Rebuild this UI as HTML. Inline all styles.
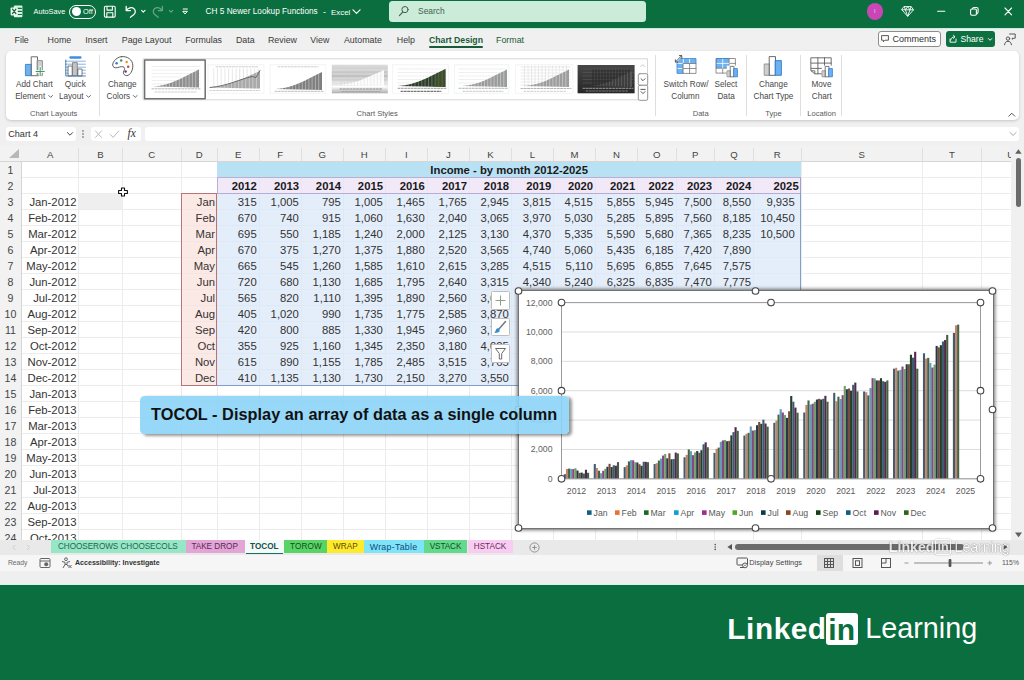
<!DOCTYPE html><html lang="en"><head><meta charset="utf-8"><title>CH 5 Newer Lookup Functions - Excel</title><style>
*{box-sizing:border-box;margin:0;padding:0}
html,body{width:1024px;height:680px;overflow:hidden}
body{position:relative;background:#f0f0f0;font-family:"Liberation Sans",sans-serif;color:#333;font-size:9px}
.abs{position:absolute}
.t{position:absolute;white-space:nowrap;line-height:1}
#title{left:0;top:0;width:1024px;height:28px;background:#0b6e3f}
#title .t{color:#fff}
#titleline{left:0;top:27.6px;width:1024px;height:1.8px;background:#c4efdc}
#tabs{left:0;top:29px;width:1024px;height:22px;background:#f0f0f0}
#tabs .t{font-size:9.3px;color:#3b3b3b;top:6.5px}
#ribbon{left:5.8px;top:50.8px;width:1013px;height:69.2px;background:#fff;border-radius:5px;box-shadow:0 1px 3px rgba(0,0,0,.18)}
#ribbon .t{font-size:8.7px;color:#444}
.sep{position:absolute;width:1px;background:#dcdcdc;top:5px;height:60px}
.glabel{font-size:8.2px !important;color:#555 !important;top:58px}

.wbox{position:absolute;background:#fff;border-radius:3px}
#grid{left:0;top:146px;width:1011px;height:394px;background:#fff;overflow:hidden}
#colhdr{left:0;top:0;width:1011px;height:15.5px;background:#f2f2f2;border-bottom:1px solid #d6d6d6}
#rowhdr{left:0;top:15.5px;width:21.5px;height:380px;background:#f2f2f2;border-right:1px solid #d6d6d6}
.ch{position:absolute;top:4px;font-size:9.6px;color:#444;text-align:center;line-height:1}
.rh{position:absolute;left:0;width:21px;font-size:10.6px;color:#444;text-align:center;line-height:1}

.vl{position:absolute;width:1px;background:#ececec;top:15.5px;height:380px}
.hl{position:absolute;height:1px;background:#ececec;left:21.5px;width:990px}
.c{position:absolute;white-space:nowrap;line-height:1;font-size:11.3px;color:#333;text-align:right}
.b{font-weight:bold;color:#1a1a1a}
#vscroll{left:1011px;top:146px;width:13px;height:394px;background:#f0f0f0}
#sheettabs{left:0;top:540px;width:1024px;height:14.5px;background:#e9e9e9}
.st{position:absolute;top:0;height:13px;font-size:8.6px;line-height:13px;text-align:center;white-space:nowrap;color:#333}
#status{left:0;top:554.5px;width:1024px;height:16px;background:#f6f6f6}
#status .t{font-size:7.4px;color:#555}
#strip{left:0;top:570.5px;width:1024px;height:14px;background:#efefef;border-bottom:1.2px solid #d6f7e6}
#banner{left:0;top:584.6px;width:1024px;height:96px;background:#0a6e3e}
</style></head><body>
<div id="title" class="abs"></div><div id="titleline" class="abs"></div>
<div class="t" style="left:33.60px;top:8.32px;font-size:7.30px;color:#fff;">AutoSave</div>
<div class="abs" style="left:68.8px;top:4.9px;width:27.3px;height:13.7px;border:1.3px solid #fff;border-radius:7px"></div>
<div class="abs" style="left:71.9px;top:7.4px;width:8.7px;height:8.7px;border-radius:5px;background:#fff"></div>
<div class="t" style="left:83.00px;top:8.04px;font-size:7.40px;color:#fff;">Off</div>
<div class="t" style="left:205.60px;top:8.23px;font-size:8.24px;color:#fff;">CH 5 Newer Lookup Functions</div>
<div class="t" style="left:323.00px;top:7.57px;font-size:9.01px;color:#fff;">-</div>
<div class="t" style="left:331.00px;top:8.51px;font-size:7.90px;color:#fff;">Excel</div>
<div class="abs" style="left:389px;top:0.5px;width:257px;height:21.8px;border-radius:3.5px;background:#cbecd9"></div>
<div class="t" style="left:418.00px;top:7.14px;font-size:8.46px;color:#44604f;">Search</div>
<div class="abs" style="left:866.5px;top:3px;width:16.6px;height:16.6px;border-radius:9px;background:#c846b6"></div>
<div class="t" style="left:874.00px;top:8.73px;font-size:5.76px;color:#f6d8f1;">I</div>
<svg class="abs" style="left:0;top:0" width="1024" height="28" viewBox="0 0 1024 28" fill="none" stroke="#fff" stroke-width="1.1" stroke-linecap="round" stroke-linejoin="round">
<rect x="13.8" y="5.6" width="8.6" height="11.6" rx="1" fill="#d9f3e5" stroke="none"/><path d="M17 8.3h4.4M17 11.4h4.4M17 14.5h4.4" stroke="#0b6e3f" stroke-width="1.2"/><rect x="10.6" y="7.4" width="7.2" height="8" rx=".8" fill="#e9f8f0" stroke="none"/><path d="M12.5 9.2l3.4 4.4M15.9 9.2l-3.4 4.4" stroke="#1d5c3b" stroke-width="1.2"/>
<rect x="104.4" y="6.3" width="10.8" height="10.8" rx="1.2"/><path d="M107 6.5v3.6h5.4V6.5M106.8 17v-4.2h6v4.2"/>
<path d="M126.2 6.4v4.2h4.2" stroke-width="1.3"/><path d="M126.4 10.4c1.8-2.6 5.2-3.6 7.4-1.8 2.2 1.8 1.8 4.6-.2 6.2l-3.2 2.4" stroke-width="1.3"/><path d="M141.6 10.4l1.7 1.7 1.7-1.7" stroke-width="1.1"/>
<g opacity=".38"><path d="M162.4 6.4v4.2h-4.2" stroke-width="1.3"/><path d="M162.2 10.4c-1.8-2.6-5.2-3.6-7.4-1.8-2.2 1.8-1.8 4.6.2 6.2l3.2 2.4" stroke-width="1.3"/><path d="M169.4 10.4l1.7 1.7 1.7-1.7" stroke-width="1.1"/></g>
<path d="M183.2 9h4.2" stroke-width="1"/><path d="M183.2 11.3h4.2l-2.1 2.4z" stroke-width="1"/>
<path d="M353 9.8l3.5 3.6 3.5-3.6" stroke-width="1.2"/>
<circle cx="405" cy="9.6" r="3.1" stroke="#44604f" stroke-width="1"/><path d="M402.8 12l-3.4 3.6" stroke="#44604f" stroke-width="1.1"/>
<path d="M904.3 6.6h6.8l2.4 3.2-5.8 6.6-5.8-6.6zM902 9.8h11.4M905.4 9.8l2.3 6.4 2.3-6.4M904.4 6.8l1 3 2.3-3.1 2.3 3.1 1-3" stroke-width=".9"/>
<path d="M937.6 11.3h7.2" stroke-width="1.1"/><rect x="970.6" y="9" width="5.8" height="6.2" rx="1.2" stroke-width="1.1"/><path d="M972.4 8.8c.2-.9.7-1.3 1.5-1.3h2.6c1 0 1.6.6 1.6 1.6v3c0 .8-.4 1.3-1.2 1.5" stroke-width="1.1"/><path d="M1005 8l6.6 6.8M1011.6 8l-6.6 6.8" stroke-width="1.1"/>
</svg>
<div class="t" style="left:14.52px;top:35.91px;font-size:8.85px;color:#3a3a3a;">File</div>
<div class="t" style="left:47.60px;top:35.91px;font-size:8.85px;color:#3a3a3a;">Home</div>
<div class="t" style="left:85.33px;top:35.91px;font-size:8.85px;color:#3a3a3a;">Insert</div>
<div class="t" style="left:121.80px;top:35.91px;font-size:8.85px;color:#3a3a3a;">Page Layout</div>
<div class="t" style="left:185.16px;top:35.91px;font-size:8.85px;color:#3a3a3a;">Formulas</div>
<div class="t" style="left:235.95px;top:35.91px;font-size:8.85px;color:#3a3a3a;">Data</div>
<div class="t" style="left:267.99px;top:35.91px;font-size:8.85px;color:#3a3a3a;">Review</div>
<div class="t" style="left:310.29px;top:35.91px;font-size:8.85px;color:#3a3a3a;">View</div>
<div class="t" style="left:343.96px;top:35.91px;font-size:8.85px;color:#3a3a3a;">Automate</div>
<div class="t" style="left:396.80px;top:35.91px;font-size:8.85px;color:#3a3a3a;">Help</div>
<div class="t" style="left:429.00px;top:36.05px;font-size:8.68px;color:#185c37;font-weight:bold;">Chart Design</div>
<div class="abs" style="left:429px;top:45.8px;width:54px;height:2px;background:#185c37;border-radius:1px"></div>
<div class="t" style="left:496.00px;top:35.91px;font-size:8.85px;color:#185c37;">Format</div>
<div class="abs" style="left:878px;top:31.3px;width:62.5px;height:16.2px;border:1px solid #8d8d8d;border-radius:3px;background:#fff"></div>
<div class="t" style="left:892.50px;top:34.98px;font-size:9.00px;color:#2f2f2f;">Comments</div>
<div class="abs" style="left:946.3px;top:31.3px;width:48.7px;height:16.2px;border-radius:3px;background:#0d7040"></div>
<div class="t" style="left:960.50px;top:35.30px;font-size:8.62px;color:#fff;">Share</div>
<svg class="abs" style="left:870px;top:29px" width="154" height="22" viewBox="870 29 154 22" fill="none" stroke-linecap="round" stroke-linejoin="round">
<path d="M882 35.6h6.4v4.6h-3.4l-1.6 1.6v-1.6H882z" stroke="#444" stroke-width=".9"/>
<path d="M950 39v3.2h6V39" stroke="#fff" stroke-width=".9"/><path d="M950.6 40.2c.4-2.2 1.8-3.4 3.8-3.4M953.4 35.2l1.6 1.6-1.6 1.6" stroke="#fff" stroke-width=".9"/>
<path d="M988.4 38.6l1.7 1.7 1.7-1.7" stroke="#fff" stroke-width="1"/>
<circle cx="1008" cy="38.6" r="1.7" stroke="#444" stroke-width=".9"/><path d="M1004.6 44.8c.2-2.4 1.4-3.4 3.4-3.4s3.2 1 3.4 3.4" stroke="#444" stroke-width=".9"/><path d="M1009.6 34h5.6v4.2h-1.6l-1.2 1.2v-1.2" stroke="#444" stroke-width=".9"/>
</svg>
<div id="ribbon" class="abs"></div>
<div class="t" style="left:16.04px;top:81.36px;font-size:8.20px;color:#484848;">Add Chart</div>
<div class="t" style="left:15.16px;top:92.76px;font-size:8.20px;color:#484848;">Element</div>
<div class="t" style="left:64.82px;top:81.36px;font-size:8.20px;color:#484848;">Quick</div>
<div class="t" style="left:58.89px;top:92.76px;font-size:8.20px;color:#484848;">Layout</div>
<div class="t" style="left:107.94px;top:81.36px;font-size:8.20px;color:#484848;">Change</div>
<div class="t" style="left:106.55px;top:92.76px;font-size:8.20px;color:#484848;">Colors</div>
<div class="t" style="left:663.44px;top:81.36px;font-size:8.20px;color:#484848;">Switch Row/</div>
<div class="t" style="left:671.27px;top:92.76px;font-size:8.20px;color:#484848;">Column</div>
<div class="t" style="left:714.60px;top:81.36px;font-size:8.20px;color:#484848;">Select</div>
<div class="t" style="left:717.44px;top:92.76px;font-size:8.20px;color:#484848;">Data</div>
<div class="t" style="left:759.04px;top:81.36px;font-size:8.20px;color:#484848;">Change</div>
<div class="t" style="left:753.52px;top:92.76px;font-size:8.20px;color:#484848;">Chart Type</div>
<div class="t" style="left:811.47px;top:81.36px;font-size:8.20px;color:#484848;">Move</div>
<div class="t" style="left:811.77px;top:92.76px;font-size:8.20px;color:#484848;">Chart</div>
<div class="t" style="left:30.04px;top:109.77px;font-size:7.60px;color:#5a5a5a;">Chart Layouts</div>
<div class="t" style="left:356.50px;top:109.77px;font-size:7.60px;color:#5a5a5a;">Chart Styles</div>
<div class="t" style="left:692.67px;top:109.77px;font-size:7.60px;color:#5a5a5a;">Data</div>
<div class="t" style="left:765.26px;top:109.77px;font-size:7.60px;color:#5a5a5a;">Type</div>
<div class="t" style="left:807.23px;top:109.77px;font-size:7.60px;color:#5a5a5a;">Location</div>
<div class="abs" style="left:99px;top:55px;width:1px;height:61px;background:#dedede"></div>
<div class="abs" style="left:654.9px;top:55px;width:1px;height:61px;background:#dedede"></div>
<div class="abs" style="left:745.7px;top:55px;width:1px;height:61px;background:#dedede"></div>
<div class="abs" style="left:800.4px;top:55px;width:1px;height:61px;background:#dedede"></div>
<div class="abs" style="left:841.4px;top:55px;width:1px;height:61px;background:#dedede"></div>
<svg class="abs" style="left:0;top:50px" width="1024" height="72" viewBox="0 50 1024 72" fill="none" stroke-linecap="round" stroke-linejoin="round">
<defs>
<linearGradient id="g4" x1="0" y1="0" x2="0" y2="1"><stop offset="0" stop-color="#dcdcdc"/><stop offset=".4" stop-color="#bebebe"/><stop offset=".68" stop-color="#e6e6e6"/><stop offset=".8" stop-color="#efefef"/><stop offset="1" stop-color="#adadad"/></linearGradient>
<linearGradient id="g8" x1="0" y1="0" x2="0" y2="1"><stop offset="0" stop-color="#474747"/><stop offset="1" stop-color="#262626"/></linearGradient>
</defs>
<path d="M48.8 95.5l1.9 1.9 1.9-1.9" stroke="#555" stroke-width=".9"/>
<path d="M86.7 95.5l1.9 1.9 1.9-1.9" stroke="#555" stroke-width=".9"/>
<path d="M133.3 95.5l1.9 1.9 1.9-1.9" stroke="#555" stroke-width=".9"/>
<rect x="25.8" y="64.4" width="5.8" height="11.3" fill="#6db1ef" stroke="#2f7dd0" stroke-width=".9"/>
<rect x="31.6" y="56.8" width="5.9" height="18.9" fill="#fff" stroke="#5a5a5a" stroke-width=".9"/>
<rect x="37.5" y="60.6" width="4.9" height="15.1" fill="#cfcfcf" stroke="#8a8a8a" stroke-width=".9"/>
<path d="M40.2 67.2v8.6M35.9 71.5h8.6" stroke="#fff" stroke-width="2.4"/><path d="M40.2 67.4v8.2M36.1 71.5h8.2" stroke="#3a9a64" stroke-width="1"/>
<rect x="69.3" y="56.2" width="12.3" height="2.5" rx="1.1" fill="#3f8fdf"/>
<path d="M65.8 61.2h19.6" stroke="#6d9fd3" stroke-width=".8"/>
<path d="M65.8 64.2h19.6" stroke="#6d9fd3" stroke-width=".8"/>
<path d="M65.8 67.2h19.6" stroke="#6d9fd3" stroke-width=".8"/>
<path d="M65.8 70.2h19.6" stroke="#6d9fd3" stroke-width=".8"/>
<path d="M65.8 73.2h19.6" stroke="#6d9fd3" stroke-width=".8"/>
<rect x="68.4" y="66" width="3.8" height="10" fill="#fff" stroke="#5a5a5a" stroke-width=".8"/>
<rect x="72.9" y="62.6" width="4.4" height="13.4" fill="#c4c4c4" stroke="#777" stroke-width=".8"/>
<rect x="78.2" y="69" width="3.8" height="7" fill="#fff" stroke="#5a5a5a" stroke-width=".8"/>
<path d="M65.8 60v16h19.6" stroke="#2f6fb5" stroke-width=".9"/>
<path d="M121.6 56.6c6.2-.6 11 3.4 11.2 8.6.2 5.4-2.6 10.2-6 10.4-2.2.1-3.6-1.6-3.4-3.4.2-1.6 1.4-2.4 1.2-3.8-.3-1.8-2.6-2.2-5-1.4-2.6.9-5.4 1.4-6.6-.6-1.6-2.8 2.4-9.200 8.600-9.800z" fill="#fff" stroke="#5a5a5a" stroke-width="1"/>
<circle cx="116.6" cy="63.2" r="1.25" fill="#2f7dd0"/>
<circle cx="121.2" cy="60.6" r="1.25" fill="#3a9a4a"/>
<circle cx="126.6" cy="62" r="1.25" fill="#e8912a"/>
<circle cx="128.2" cy="66.8" r="1.25" fill="#d2413a"/>
<circle cx="125.6" cy="71.4" r="1.25" fill="#6a3a8a"/>
<rect x="677" y="58.5" width="19" height="14.9" fill="#fff"/>
<rect x="677" y="58.5" width="19" height="5" fill="#6db1ef"/><rect x="677" y="58.5" width="6.3" height="14.9" fill="#6db1ef"/>
<path d="M683.3 58.5v5M689.6 58.5v5M677 63.5h6.300M677 68.5h6.300" stroke="#fff" stroke-width=".8"/>
<path d="M683.3 63.5h12.700v9.900h-12.700z M689.6 63.5v9.9M683.3 68.5h12.7" stroke="#777" stroke-width=".8"/>
<path d="M677 58.500h19v5M677 58.500v14.900h6.300" stroke="#3f86d4" stroke-width=".8"/>
<path d="M674 62.600l7.600-7.600" stroke="#fff" stroke-width="3"/><path d="M675.4 59.800v2.200h2.200M675.600 61.800l6-6M679.400 55.600h2.400v2.400" stroke="#444" stroke-width=".9"/>
<rect x="716.4" y="58.5" width="19" height="14.6" fill="#fff"/><rect x="716.4" y="58.5" width="12.7" height="9.7" fill="#6db1ef"/>
<path d="M716.4 58.5h19v14.600h-19zM729.100 58.500v14.600M716.400 68.200h19M729.100 63.400h6.300M722.700 68.200v4.900" stroke="#777" stroke-width=".8"/>
<path d="M722.700 58.500v9.700M716.400 63.400h12.700" stroke="#fff" stroke-width=".8"/><path d="M716.400 68.200v-9.700h12.700" stroke="#3f86d4" stroke-width=".8"/>
<rect x="726.8" y="65.6" width="11.6" height="11.8" fill="#fff" stroke="none"/>
<rect x="727.4" y="70.8" width="3.2" height="6" fill="#cfcfcf" stroke="#8a8a8a" stroke-width=".8"/>
<rect x="730.6" y="66.4" width="3.4" height="10.4" fill="#fff" stroke="#5a5a5a" stroke-width=".8"/>
<rect x="734" y="68.6" width="3.4" height="8.200" fill="#6db1ef" stroke="#2f7dd0" stroke-width=".8"/>
<rect x="764.6" y="64" width="5" height="11.300" fill="#cfcfcf" stroke="#8a8a8a" stroke-width=".9"/>
<rect x="769.6" y="56.6" width="5.9" height="18.700" fill="#fff" stroke="#5a5a5a" stroke-width=".9"/>
<rect x="775.5" y="60.6" width="5.9" height="14.700" fill="#6db1ef" stroke="#2f7dd0" stroke-width=".9"/>
<path d="M811.2 57.800h20v16h-16.400l-3.600-3zM811.200 63.100h20M811.200 68.400h20M817.900 57.800v16M824.500 57.800v16" stroke="#5f5f5f" stroke-width=".9" fill="#fff"/>
<path d="M811.2 70.800h3.600v3" stroke="#5f5f5f" stroke-width=".9"/>
<rect x="821.8" y="65.6" width="11.6" height="11.8" fill="#fff" stroke="none"/>
<rect x="822.4" y="70.8" width="3.2" height="6" fill="#cfcfcf" stroke="#8a8a8a" stroke-width=".8"/>
<rect x="825.6" y="66.4" width="3.4" height="10.4" fill="#fff" stroke="#5a5a5a" stroke-width=".8"/>
<rect x="829" y="68.6" width="3.4" height="8.200" fill="#6db1ef" stroke="#2f7dd0" stroke-width=".8"/>
<rect x="143.5" y="58.800" width="504" height="41" fill="#fff" stroke="#d6d6d6" stroke-width="1"/>
<path d="M640.800 66.600l2-2 2 2" stroke="#c2c2c2" stroke-width=".9"/>
<rect x="638.300" y="73.700" width="9.400" height="11.600" rx="1.5" fill="#fff" stroke="#8a8a8a" stroke-width=".9"/><path d="M641 78.700l2 2 2-2" stroke="#444" stroke-width=".9"/>
<rect x="638.300" y="85.300" width="9.400" height="15" rx="1.500" fill="#fff" stroke="#8a8a8a" stroke-width=".9"/><path d="M640.800 89.400h4.400M641 91.600l2 2 2-2" stroke="#444" stroke-width=".9"/>
<rect x="144.600" y="59.900" width="60.600" height="38.800" fill="#fff" stroke="#6f6f6f" stroke-width="1.500"/>
<path d="M152.0 66.5H200.0" stroke="#e2e2e2" stroke-width=".6"/>
<path d="M152.0 70.0H200.0" stroke="#e2e2e2" stroke-width=".6"/>
<path d="M152.0 73.5H200.0" stroke="#e2e2e2" stroke-width=".6"/>
<path d="M152.0 77.0H200.0" stroke="#e2e2e2" stroke-width=".6"/>
<path d="M152.0 80.5H200.0" stroke="#e2e2e2" stroke-width=".6"/>
<path d="M152.0 84.0H200.0" stroke="#e2e2e2" stroke-width=".6"/>
<path d="M153.0 86.5C172.0 85.0 180.0 78.5 199.0 69.5V87.5z" fill="#8f8f8f" opacity="1"/>
<path d="M156.3 69.0V87.5" stroke="#fff" stroke-width="0.7" opacity="0.55"/>
<path d="M159.6 69.0V87.5" stroke="#fff" stroke-width="0.7" opacity="0.55"/>
<path d="M162.9 69.0V87.5" stroke="#fff" stroke-width="0.7" opacity="0.55"/>
<path d="M166.1 69.0V87.5" stroke="#fff" stroke-width="0.7" opacity="0.55"/>
<path d="M169.4 69.0V87.5" stroke="#fff" stroke-width="0.7" opacity="0.55"/>
<path d="M172.7 69.0V87.5" stroke="#fff" stroke-width="0.7" opacity="0.55"/>
<path d="M176.0 69.0V87.5" stroke="#fff" stroke-width="0.7" opacity="0.55"/>
<path d="M179.3 69.0V87.5" stroke="#fff" stroke-width="0.7" opacity="0.55"/>
<path d="M182.6 69.0V87.5" stroke="#fff" stroke-width="0.7" opacity="0.55"/>
<path d="M185.9 69.0V87.5" stroke="#fff" stroke-width="0.7" opacity="0.55"/>
<path d="M189.1 69.0V87.5" stroke="#fff" stroke-width="0.7" opacity="0.55"/>
<path d="M192.4 69.0V87.5" stroke="#fff" stroke-width="0.7" opacity="0.55"/>
<path d="M195.7 69.0V87.5" stroke="#fff" stroke-width="0.7" opacity="0.55"/>
<path d="M152.0 88.8H200.0" stroke="#b9b9b9" stroke-width="1" stroke-dasharray="2 1.300"/>
<path d="M155.0 92.0H196.0" stroke="#cfcfcf" stroke-width="1" stroke-dasharray="2 1.300"/>
<rect x="208.400" y="64.700" width="55.600" height="28.600" fill="#fff" stroke="#ececec" stroke-width=".6"/>
<path d="M216.0 66.8H258.0" stroke="#cfcfcf" stroke-width="1" stroke-dasharray="2 1.300"/>
<path d="M213.7 69.0V88.0" stroke="#d0d0d0" stroke-width="0.6" opacity="1"/>
<path d="M217.4 69.0V88.0" stroke="#d0d0d0" stroke-width="0.6" opacity="1"/>
<path d="M221.1 69.0V88.0" stroke="#d0d0d0" stroke-width="0.6" opacity="1"/>
<path d="M224.9 69.0V88.0" stroke="#d0d0d0" stroke-width="0.6" opacity="1"/>
<path d="M228.6 69.0V88.0" stroke="#d0d0d0" stroke-width="0.6" opacity="1"/>
<path d="M232.3 69.0V88.0" stroke="#d0d0d0" stroke-width="0.6" opacity="1"/>
<path d="M236.0 69.0V88.0" stroke="#d0d0d0" stroke-width="0.6" opacity="1"/>
<path d="M239.7 69.0V88.0" stroke="#d0d0d0" stroke-width="0.6" opacity="1"/>
<path d="M243.4 69.0V88.0" stroke="#d0d0d0" stroke-width="0.6" opacity="1"/>
<path d="M247.1 69.0V88.0" stroke="#d0d0d0" stroke-width="0.6" opacity="1"/>
<path d="M250.9 69.0V88.0" stroke="#d0d0d0" stroke-width="0.6" opacity="1"/>
<path d="M254.6 69.0V88.0" stroke="#d0d0d0" stroke-width="0.6" opacity="1"/>
<path d="M258.3 69.0V88.0" stroke="#d0d0d0" stroke-width="0.6" opacity="1"/>
<path d="M210.0 87.5C231.0 86.0 239.0 79.8 260.0 71.0V88.5z" fill="#a9a9a9" opacity="1"/>
<path d="M213.6 70.0V88.5" stroke="#fff" stroke-width="0.7" opacity="0.55"/>
<path d="M217.1 70.0V88.5" stroke="#fff" stroke-width="0.7" opacity="0.55"/>
<path d="M220.7 70.0V88.5" stroke="#fff" stroke-width="0.7" opacity="0.55"/>
<path d="M224.3 70.0V88.5" stroke="#fff" stroke-width="0.7" opacity="0.55"/>
<path d="M227.9 70.0V88.5" stroke="#fff" stroke-width="0.7" opacity="0.55"/>
<path d="M231.4 70.0V88.5" stroke="#fff" stroke-width="0.7" opacity="0.55"/>
<path d="M235.0 70.0V88.5" stroke="#fff" stroke-width="0.7" opacity="0.55"/>
<path d="M238.6 70.0V88.5" stroke="#fff" stroke-width="0.7" opacity="0.55"/>
<path d="M242.1 70.0V88.5" stroke="#fff" stroke-width="0.7" opacity="0.55"/>
<path d="M245.7 70.0V88.5" stroke="#fff" stroke-width="0.7" opacity="0.55"/>
<path d="M249.3 70.0V88.5" stroke="#fff" stroke-width="0.7" opacity="0.55"/>
<path d="M252.9 70.0V88.5" stroke="#fff" stroke-width="0.7" opacity="0.55"/>
<path d="M256.4 70.0V88.5" stroke="#fff" stroke-width="0.7" opacity="0.55"/>
<path d="M210 87.500C228 86 240 79 252 76.500l4 1 4-7" stroke="#6a6a6a" stroke-width="1"/>
<path d="M210.0 90.5H260.0" stroke="#d2d2d2" stroke-width="1" stroke-dasharray="2 1.300"/>
<rect x="270.400" y="64.700" width="55.400" height="28.600" fill="#fff" stroke="#ececec" stroke-width=".6"/>
<path d="M278.0 66.8H318.0" stroke="#cfcfcf" stroke-width="1" stroke-dasharray="2 1.300"/>
<path d="M276.0 89.0C295.0 87.5 303.0 81.0 322.0 72.0V90.0z" fill="#7f7f7f" opacity="1"/>
<path d="M279.3 71.0V90.0" stroke="#fff" stroke-width="0.7" opacity="0.55"/>
<path d="M282.6 71.0V90.0" stroke="#fff" stroke-width="0.7" opacity="0.55"/>
<path d="M285.9 71.0V90.0" stroke="#fff" stroke-width="0.7" opacity="0.55"/>
<path d="M289.1 71.0V90.0" stroke="#fff" stroke-width="0.7" opacity="0.55"/>
<path d="M292.4 71.0V90.0" stroke="#fff" stroke-width="0.7" opacity="0.55"/>
<path d="M295.7 71.0V90.0" stroke="#fff" stroke-width="0.7" opacity="0.55"/>
<path d="M299.0 71.0V90.0" stroke="#fff" stroke-width="0.7" opacity="0.55"/>
<path d="M302.3 71.0V90.0" stroke="#fff" stroke-width="0.7" opacity="0.55"/>
<path d="M305.6 71.0V90.0" stroke="#fff" stroke-width="0.7" opacity="0.55"/>
<path d="M308.9 71.0V90.0" stroke="#fff" stroke-width="0.7" opacity="0.55"/>
<path d="M312.1 71.0V90.0" stroke="#fff" stroke-width="0.7" opacity="0.55"/>
<path d="M315.4 71.0V90.0" stroke="#fff" stroke-width="0.7" opacity="0.55"/>
<path d="M318.7 71.0V90.0" stroke="#fff" stroke-width="0.7" opacity="0.55"/>
<path d="M275.0 91.3H324.0" stroke="#bdbdbd" stroke-width="1" stroke-dasharray="2 1.300"/>
<rect x="331.800" y="64.700" width="56" height="28.600" fill="url(#g4)"/>
<path d="M333.0 70.0H387.0" stroke="#f4f4f4" stroke-width=".6"/>
<path d="M333.0 74.0H387.0" stroke="#f4f4f4" stroke-width=".6"/>
<path d="M333.0 78.0H387.0" stroke="#f4f4f4" stroke-width=".6"/>
<path d="M333.0 82.0H387.0" stroke="#f4f4f4" stroke-width=".6"/>
<path d="M338.0 85.0C357.0 83.5 365.0 78.0 384.0 70.0V86.0z" fill="#ffffff" opacity="0.92"/>
<path d="M341.3 70.0V86.0" stroke="#cfcfcf" stroke-width="0.7" opacity="0.5"/>
<path d="M344.6 70.0V86.0" stroke="#cfcfcf" stroke-width="0.7" opacity="0.5"/>
<path d="M347.9 70.0V86.0" stroke="#cfcfcf" stroke-width="0.7" opacity="0.5"/>
<path d="M351.1 70.0V86.0" stroke="#cfcfcf" stroke-width="0.7" opacity="0.5"/>
<path d="M354.4 70.0V86.0" stroke="#cfcfcf" stroke-width="0.7" opacity="0.5"/>
<path d="M357.7 70.0V86.0" stroke="#cfcfcf" stroke-width="0.7" opacity="0.5"/>
<path d="M361.0 70.0V86.0" stroke="#cfcfcf" stroke-width="0.7" opacity="0.5"/>
<path d="M364.3 70.0V86.0" stroke="#cfcfcf" stroke-width="0.7" opacity="0.5"/>
<path d="M367.6 70.0V86.0" stroke="#cfcfcf" stroke-width="0.7" opacity="0.5"/>
<path d="M370.9 70.0V86.0" stroke="#cfcfcf" stroke-width="0.7" opacity="0.5"/>
<path d="M374.1 70.0V86.0" stroke="#cfcfcf" stroke-width="0.7" opacity="0.5"/>
<path d="M377.4 70.0V86.0" stroke="#cfcfcf" stroke-width="0.7" opacity="0.5"/>
<path d="M380.7 70.0V86.0" stroke="#cfcfcf" stroke-width="0.7" opacity="0.5"/>
<path d="M333 86.500h53" stroke="#fff" stroke-width="1.600"/>
<path d="M340.0 89.0H382.0" stroke="#8d8d8d" stroke-width="1" stroke-dasharray="2 1.300"/>
<path d="M342.0 91.5H380.0" stroke="#a5a5a5" stroke-width="1" stroke-dasharray="2 1.300"/>
<rect x="393" y="64.700" width="55.600" height="28.600" fill="#fff" stroke="#ececec" stroke-width=".6"/>
<path d="M398.0 69.0H446.0" stroke="#e2e2e2" stroke-width=".6"/>
<path d="M398.0 72.5H446.0" stroke="#e2e2e2" stroke-width=".6"/>
<path d="M398.0 76.0H446.0" stroke="#e2e2e2" stroke-width=".6"/>
<path d="M398.0 79.5H446.0" stroke="#e2e2e2" stroke-width=".6"/>
<path d="M398.0 83.0H446.0" stroke="#e2e2e2" stroke-width=".6"/>
<path d="M398.0 86.0C417.8 84.5 425.8 78.0 445.5 69.0V87.0z" fill="#2c3d2a" opacity="1"/>
<path d="M401.4 69.0V87.0" stroke="#fff" stroke-width="0.7" opacity="0.4"/>
<path d="M404.8 69.0V87.0" stroke="#fff" stroke-width="0.7" opacity="0.4"/>
<path d="M408.2 69.0V87.0" stroke="#fff" stroke-width="0.7" opacity="0.4"/>
<path d="M411.6 69.0V87.0" stroke="#fff" stroke-width="0.7" opacity="0.4"/>
<path d="M415.0 69.0V87.0" stroke="#fff" stroke-width="0.7" opacity="0.4"/>
<path d="M418.4 69.0V87.0" stroke="#fff" stroke-width="0.7" opacity="0.4"/>
<path d="M421.8 69.0V87.0" stroke="#fff" stroke-width="0.7" opacity="0.4"/>
<path d="M425.1 69.0V87.0" stroke="#fff" stroke-width="0.7" opacity="0.4"/>
<path d="M428.5 69.0V87.0" stroke="#fff" stroke-width="0.7" opacity="0.4"/>
<path d="M431.9 69.0V87.0" stroke="#fff" stroke-width="0.7" opacity="0.4"/>
<path d="M435.3 69.0V87.0" stroke="#fff" stroke-width="0.7" opacity="0.4"/>
<path d="M438.7 69.0V87.0" stroke="#fff" stroke-width="0.7" opacity="0.4"/>
<path d="M442.1 69.0V87.0" stroke="#fff" stroke-width="0.7" opacity="0.4"/>
<path d="M434 76l11.500-7v18h-11.500z" fill="#4a5a2e" opacity=".6"/>
<path d="M398.0 88.3H446.0" stroke="#9a9a9a" stroke-width="1" stroke-dasharray="2 1.300"/>
<path d="M401.0 91.3H441.0" stroke="#555" stroke-width="1" stroke-dasharray="2 1.300"/>
<rect x="454.800" y="64.700" width="54" height="28.600" fill="#fff" stroke="#e6ecf2" stroke-width=".6"/>
<path d="M459.0 69.0H507.0" stroke="#e2e2e2" stroke-width=".6"/>
<path d="M459.0 72.5H507.0" stroke="#e2e2e2" stroke-width=".6"/>
<path d="M459.0 76.0H507.0" stroke="#e2e2e2" stroke-width=".6"/>
<path d="M459.0 79.5H507.0" stroke="#e2e2e2" stroke-width=".6"/>
<path d="M459.0 83.0H507.0" stroke="#e2e2e2" stroke-width=".6"/>
<path d="M462.0 86.0C480.5 84.5 488.5 78.2 507.0 69.5V87.0z" fill="#9b9b9b" opacity="1"/>
<path d="M465.2 69.0V87.0" stroke="#fff" stroke-width="0.7" opacity="0.55"/>
<path d="M468.4 69.0V87.0" stroke="#fff" stroke-width="0.7" opacity="0.55"/>
<path d="M471.6 69.0V87.0" stroke="#fff" stroke-width="0.7" opacity="0.55"/>
<path d="M474.9 69.0V87.0" stroke="#fff" stroke-width="0.7" opacity="0.55"/>
<path d="M478.1 69.0V87.0" stroke="#fff" stroke-width="0.7" opacity="0.55"/>
<path d="M481.3 69.0V87.0" stroke="#fff" stroke-width="0.7" opacity="0.55"/>
<path d="M484.5 69.0V87.0" stroke="#fff" stroke-width="0.7" opacity="0.55"/>
<path d="M487.7 69.0V87.0" stroke="#fff" stroke-width="0.7" opacity="0.55"/>
<path d="M490.9 69.0V87.0" stroke="#fff" stroke-width="0.7" opacity="0.55"/>
<path d="M494.1 69.0V87.0" stroke="#fff" stroke-width="0.7" opacity="0.55"/>
<path d="M497.4 69.0V87.0" stroke="#fff" stroke-width="0.7" opacity="0.55"/>
<path d="M500.6 69.0V87.0" stroke="#fff" stroke-width="0.7" opacity="0.55"/>
<path d="M503.8 69.0V87.0" stroke="#fff" stroke-width="0.7" opacity="0.55"/>
<path d="M459.0 88.3H508.0" stroke="#b5b5b5" stroke-width="1" stroke-dasharray="2 1.300"/>
<path d="M463.0 91.3H503.0" stroke="#c9c9c9" stroke-width="1" stroke-dasharray="2 1.300"/>
<rect x="515.800" y="64.700" width="57" height="28.600" fill="#fff" stroke="#ececec" stroke-width=".6"/>
<path d="M521.0 67.0H570.0" stroke="#dcdcdc" stroke-width=".6"/>
<path d="M521.0 70.0H570.0" stroke="#dcdcdc" stroke-width=".6"/>
<path d="M521.0 73.0H570.0" stroke="#dcdcdc" stroke-width=".6"/>
<path d="M521.0 76.0H570.0" stroke="#dcdcdc" stroke-width=".6"/>
<path d="M521.0 79.0H570.0" stroke="#dcdcdc" stroke-width=".6"/>
<path d="M521.0 82.0H570.0" stroke="#dcdcdc" stroke-width=".6"/>
<path d="M521.0 85.0H570.0" stroke="#dcdcdc" stroke-width=".6"/>
<path d="M524.5 66.0V87.0" stroke="#dcdcdc" stroke-width="0.6" opacity="1"/>
<path d="M528.0 66.0V87.0" stroke="#dcdcdc" stroke-width="0.6" opacity="1"/>
<path d="M531.5 66.0V87.0" stroke="#dcdcdc" stroke-width="0.6" opacity="1"/>
<path d="M535.0 66.0V87.0" stroke="#dcdcdc" stroke-width="0.6" opacity="1"/>
<path d="M538.5 66.0V87.0" stroke="#dcdcdc" stroke-width="0.6" opacity="1"/>
<path d="M542.0 66.0V87.0" stroke="#dcdcdc" stroke-width="0.6" opacity="1"/>
<path d="M545.5 66.0V87.0" stroke="#dcdcdc" stroke-width="0.6" opacity="1"/>
<path d="M549.0 66.0V87.0" stroke="#dcdcdc" stroke-width="0.6" opacity="1"/>
<path d="M552.5 66.0V87.0" stroke="#dcdcdc" stroke-width="0.6" opacity="1"/>
<path d="M556.0 66.0V87.0" stroke="#dcdcdc" stroke-width="0.6" opacity="1"/>
<path d="M559.5 66.0V87.0" stroke="#dcdcdc" stroke-width="0.6" opacity="1"/>
<path d="M563.0 66.0V87.0" stroke="#dcdcdc" stroke-width="0.6" opacity="1"/>
<path d="M566.5 66.0V87.0" stroke="#dcdcdc" stroke-width="0.6" opacity="1"/>
<path d="M524.0 86.0C542.5 84.5 550.5 78.2 569.0 69.5V87.0z" fill="#9d9d9d" opacity="1"/>
<path d="M527.2 69.0V87.0" stroke="#fff" stroke-width="0.7" opacity="0.55"/>
<path d="M530.4 69.0V87.0" stroke="#fff" stroke-width="0.7" opacity="0.55"/>
<path d="M533.6 69.0V87.0" stroke="#fff" stroke-width="0.7" opacity="0.55"/>
<path d="M536.9 69.0V87.0" stroke="#fff" stroke-width="0.7" opacity="0.55"/>
<path d="M540.1 69.0V87.0" stroke="#fff" stroke-width="0.7" opacity="0.55"/>
<path d="M543.3 69.0V87.0" stroke="#fff" stroke-width="0.7" opacity="0.55"/>
<path d="M546.5 69.0V87.0" stroke="#fff" stroke-width="0.7" opacity="0.55"/>
<path d="M549.7 69.0V87.0" stroke="#fff" stroke-width="0.7" opacity="0.55"/>
<path d="M552.9 69.0V87.0" stroke="#fff" stroke-width="0.7" opacity="0.55"/>
<path d="M556.1 69.0V87.0" stroke="#fff" stroke-width="0.7" opacity="0.55"/>
<path d="M559.4 69.0V87.0" stroke="#fff" stroke-width="0.7" opacity="0.55"/>
<path d="M562.6 69.0V87.0" stroke="#fff" stroke-width="0.7" opacity="0.55"/>
<path d="M565.8 69.0V87.0" stroke="#fff" stroke-width="0.7" opacity="0.55"/>
<path d="M521.0 88.5H571.0" stroke="#b5b5b5" stroke-width="1" stroke-dasharray="2 1.300"/>
<path d="M524.0 91.3H566.0" stroke="#d0d0d0" stroke-width="1" stroke-dasharray="2 1.300"/>
<rect x="577.600" y="65" width="57" height="28.300" fill="url(#g8)"/>
<path d="M583.0 69.0H633.0" stroke="#5a5a5a" stroke-width=".6"/>
<path d="M583.0 72.5H633.0" stroke="#5a5a5a" stroke-width=".6"/>
<path d="M583.0 76.0H633.0" stroke="#5a5a5a" stroke-width=".6"/>
<path d="M583.0 79.5H633.0" stroke="#5a5a5a" stroke-width=".6"/>
<path d="M583.0 83.0H633.0" stroke="#5a5a5a" stroke-width=".6"/>
<path d="M590.0 86.0C607.0 84.5 615.0 79.0 632.0 71.0V87.0z" fill="#5b5b5b" opacity="0.9"/>
<path d="M593.0 70.0V87.0" stroke="#2e2e2e" stroke-width="1.3" opacity="0.9"/>
<path d="M596.0 70.0V87.0" stroke="#2e2e2e" stroke-width="1.3" opacity="0.9"/>
<path d="M599.0 70.0V87.0" stroke="#2e2e2e" stroke-width="1.3" opacity="0.9"/>
<path d="M602.0 70.0V87.0" stroke="#2e2e2e" stroke-width="1.3" opacity="0.9"/>
<path d="M605.0 70.0V87.0" stroke="#2e2e2e" stroke-width="1.3" opacity="0.9"/>
<path d="M608.0 70.0V87.0" stroke="#2e2e2e" stroke-width="1.3" opacity="0.9"/>
<path d="M611.0 70.0V87.0" stroke="#2e2e2e" stroke-width="1.3" opacity="0.9"/>
<path d="M614.0 70.0V87.0" stroke="#2e2e2e" stroke-width="1.3" opacity="0.9"/>
<path d="M617.0 70.0V87.0" stroke="#2e2e2e" stroke-width="1.3" opacity="0.9"/>
<path d="M620.0 70.0V87.0" stroke="#2e2e2e" stroke-width="1.3" opacity="0.9"/>
<path d="M623.0 70.0V87.0" stroke="#2e2e2e" stroke-width="1.3" opacity="0.9"/>
<path d="M626.0 70.0V87.0" stroke="#2e2e2e" stroke-width="1.3" opacity="0.9"/>
<path d="M629.0 70.0V87.0" stroke="#2e2e2e" stroke-width="1.3" opacity="0.9"/>
<path d="M583.0 88.3H633.0" stroke="#9a9a9a" stroke-width="1" stroke-dasharray="2 1.300"/>
<path d="M586.0 91.0H628.0" stroke="#777" stroke-width="1" stroke-dasharray="2 1.300"/>
</svg>
<svg class="abs" style="left:1004px;top:108px" width="16" height="12" viewBox="0 0 16 12" fill="none"><path d="M4.800 8.200l3-3 3 3" stroke="#555" stroke-width="1" stroke-linecap="round" stroke-linejoin="round"/></svg>
<div class="wbox" style="left:6px;top:127.2px;width:70px;height:13.8px"></div>
<div class="t" style="left:8.20px;top:129.56px;font-size:9.15px;color:#333;">Chart 4</div>
<div class="wbox" style="left:90.8px;top:127.2px;width:50px;height:13.8px"></div>
<div class="t" style="left:127.5px;top:127.6px;font-size:11.5px;font-style:italic;font-family:'Liberation Serif',serif;color:#333">fx</div>
<div class="wbox" style="left:145px;top:127.2px;width:874px;height:13.8px"></div>
<svg class="abs" style="left:0;top:122px" width="1024" height="24" viewBox="0 122 1024 24" fill="none" stroke-linecap="round" stroke-linejoin="round">
<path d="M67.4 132.6l2.6 2.6 2.6-2.6" stroke="#444" stroke-width="1"/>
<circle cx="83" cy="131" r=".8" fill="#555"/><circle cx="83" cy="134" r=".8" fill="#555"/><circle cx="83" cy="137" r=".8" fill="#555"/>
<path d="M95.5 131l6 6.4M101.5 131l-6 6.4" stroke="#b8b8b8" stroke-width="1"/><path d="M110.5 134.6l2.6 2.8 5.6-6.4" stroke="#b8b8b8" stroke-width="1"/>
<path d="M1010 132.400l3.100 3 3.100-3" stroke="#aaa" stroke-width="1"/>
</svg>
<div id="grid" class="abs">
<div class="abs" style="left:217.3px;top:15.5px;width:583.7px;height:16px;background:#b9e1f4"></div>
<div class="abs" style="left:78.7px;top:47.5px;width:43.6px;height:16px;background:#efefef"></div>
<div class="vl" style="left:78.2px"></div>
<div class="vl" style="left:121.8px"></div>
<div class="vl" style="left:180.8px"></div>
<div class="vl" style="left:216.8px"></div>
<div class="vl" style="left:258.7px"></div>
<div class="vl" style="left:300.9px"></div>
<div class="vl" style="left:342.8px"></div>
<div class="vl" style="left:384.8px"></div>
<div class="vl" style="left:426.7px"></div>
<div class="vl" style="left:468.9px"></div>
<div class="vl" style="left:510.8px"></div>
<div class="vl" style="left:553.1px"></div>
<div class="vl" style="left:594.9px"></div>
<div class="vl" style="left:637px"></div>
<div class="vl" style="left:675.5px"></div>
<div class="vl" style="left:713.9px"></div>
<div class="vl" style="left:753px"></div>
<div class="vl" style="left:800.5px"></div>
<div class="vl" style="left:922px"></div>
<div class="vl" style="left:980.8px"></div>
<div class="vl" style="left:1039.5px"></div>
<div class="hl" style="top:31px"></div>
<div class="hl" style="top:47px"></div>
<div class="hl" style="top:63px"></div>
<div class="hl" style="top:79px"></div>
<div class="hl" style="top:95px"></div>
<div class="hl" style="top:111px"></div>
<div class="hl" style="top:127px"></div>
<div class="hl" style="top:143px"></div>
<div class="hl" style="top:159px"></div>
<div class="hl" style="top:175px"></div>
<div class="hl" style="top:191px"></div>
<div class="hl" style="top:207px"></div>
<div class="hl" style="top:223px"></div>
<div class="hl" style="top:239px"></div>
<div class="hl" style="top:255px"></div>
<div class="hl" style="top:271px"></div>
<div class="hl" style="top:287px"></div>
<div class="hl" style="top:303px"></div>
<div class="hl" style="top:319px"></div>
<div class="hl" style="top:335px"></div>
<div class="hl" style="top:351px"></div>
<div class="hl" style="top:367px"></div>
<div class="hl" style="top:383px"></div>
<div class="hl" style="top:399px"></div>
<div class="hl" style="top:415px"></div>
<div class="abs" style="left:217.3px;top:31.5px;width:583.7px;height:16px;background:rgba(236,224,246,.75)"></div>
<div class="abs" style="left:217.3px;top:47.5px;width:583.7px;height:192px;background:rgba(219,232,248,.75)"></div>
<div class="abs" style="left:181.3px;top:47.5px;width:36px;height:192px;background:rgba(250,226,222,.75)"></div>
<div class="abs" style="left:217.3px;top:15.5px;width:583.2px;height:15px;background:#b9e1f4"></div>
<div class="abs" style="left:217.3px;top:31px;width:583.7px;height:17px;border:1px solid #8a80c0;border-left:1px solid #9a86b8;border-right:1px solid #7a5aa6;opacity:.55"></div>
<div class="abs" style="left:180.8px;top:47px;width:36.5px;height:193px;border:1px solid #b87476"></div>
<div class="abs" style="left:217.3px;top:47px;width:583.7px;height:193px;border:1px solid #7f9fd0;border-left:none;border-top:none"></div>
<div id="colhdr" class="abs"></div><div id="rowhdr" class="abs"></div>
<div class="abs" style="left:9px;top:3.2px;width:0;height:0;border-left:10.5px solid transparent;border-bottom:9.8px solid #b7b7b7"></div>
<div class="ch" style="left:21.5px;width:57.2px">A</div>
<div class="abs" style="left:78.2px;top:2px;width:1px;height:13px;background:#dfdfdf"></div>
<div class="ch" style="left:78.7px;width:43.6px">B</div>
<div class="abs" style="left:121.8px;top:2px;width:1px;height:13px;background:#dfdfdf"></div>
<div class="ch" style="left:122.3px;width:59px">C</div>
<div class="abs" style="left:180.8px;top:2px;width:1px;height:13px;background:#dfdfdf"></div>
<div class="ch" style="left:181.3px;width:36px">D</div>
<div class="abs" style="left:216.8px;top:2px;width:1px;height:13px;background:#dfdfdf"></div>
<div class="ch" style="left:217.3px;width:41.9px">E</div>
<div class="abs" style="left:258.7px;top:2px;width:1px;height:13px;background:#dfdfdf"></div>
<div class="ch" style="left:259.2px;width:42.2px">F</div>
<div class="abs" style="left:300.9px;top:2px;width:1px;height:13px;background:#dfdfdf"></div>
<div class="ch" style="left:301.4px;width:41.9px">G</div>
<div class="abs" style="left:342.8px;top:2px;width:1px;height:13px;background:#dfdfdf"></div>
<div class="ch" style="left:343.3px;width:42px">H</div>
<div class="abs" style="left:384.8px;top:2px;width:1px;height:13px;background:#dfdfdf"></div>
<div class="ch" style="left:385.3px;width:41.9px">I</div>
<div class="abs" style="left:426.7px;top:2px;width:1px;height:13px;background:#dfdfdf"></div>
<div class="ch" style="left:427.2px;width:42.2px">J</div>
<div class="abs" style="left:468.9px;top:2px;width:1px;height:13px;background:#dfdfdf"></div>
<div class="ch" style="left:469.4px;width:41.9px">K</div>
<div class="abs" style="left:510.8px;top:2px;width:1px;height:13px;background:#dfdfdf"></div>
<div class="ch" style="left:511.3px;width:42.3px">L</div>
<div class="abs" style="left:553.1px;top:2px;width:1px;height:13px;background:#dfdfdf"></div>
<div class="ch" style="left:553.6px;width:41.8px">M</div>
<div class="abs" style="left:594.9px;top:2px;width:1px;height:13px;background:#dfdfdf"></div>
<div class="ch" style="left:595.4px;width:42.1px">N</div>
<div class="abs" style="left:637px;top:2px;width:1px;height:13px;background:#dfdfdf"></div>
<div class="ch" style="left:637.5px;width:38.5px">O</div>
<div class="abs" style="left:675.5px;top:2px;width:1px;height:13px;background:#dfdfdf"></div>
<div class="ch" style="left:676px;width:38.4px">P</div>
<div class="abs" style="left:713.9px;top:2px;width:1px;height:13px;background:#dfdfdf"></div>
<div class="ch" style="left:714.4px;width:39.1px">Q</div>
<div class="abs" style="left:753px;top:2px;width:1px;height:13px;background:#dfdfdf"></div>
<div class="ch" style="left:753.5px;width:47.5px">R</div>
<div class="abs" style="left:800.5px;top:2px;width:1px;height:13px;background:#dfdfdf"></div>
<div class="ch" style="left:801px;width:121.5px">S</div>
<div class="abs" style="left:922px;top:2px;width:1px;height:13px;background:#dfdfdf"></div>
<div class="ch" style="left:922.5px;width:58.8px">T</div>
<div class="abs" style="left:980.8px;top:2px;width:1px;height:13px;background:#dfdfdf"></div>
<div class="ch" style="left:981.3px;width:58.7px">U</div>
<div class="abs" style="left:1039.5px;top:2px;width:1px;height:13px;background:#dfdfdf"></div>
<div class="rh" style="top:19.4px">1</div>
<div class="rh" style="top:35.4px">2</div>
<div class="rh" style="top:51.4px">3</div>
<div class="rh" style="top:67.4px">4</div>
<div class="rh" style="top:83.4px">5</div>
<div class="rh" style="top:99.4px">6</div>
<div class="rh" style="top:115.4px">7</div>
<div class="rh" style="top:131.4px">8</div>
<div class="rh" style="top:147.4px">9</div>
<div class="rh" style="top:163.4px">10</div>
<div class="rh" style="top:179.4px">11</div>
<div class="rh" style="top:195.4px">12</div>
<div class="rh" style="top:211.4px">13</div>
<div class="rh" style="top:227.4px">14</div>
<div class="rh" style="top:243.4px">15</div>
<div class="rh" style="top:259.4px">16</div>
<div class="rh" style="top:275.4px">17</div>
<div class="rh" style="top:291.4px">18</div>
<div class="rh" style="top:307.4px">19</div>
<div class="rh" style="top:323.4px">20</div>
<div class="rh" style="top:339.4px">21</div>
<div class="rh" style="top:355.4px">22</div>
<div class="rh" style="top:371.4px">23</div>
<div class="rh" style="top:387.4px">24</div>
<div class="rh" style="top:403.4px">25</div>
<div class="c " style="left:21.5px;width:55px;top:51px">Jan-2012</div>
<div class="c " style="left:21.5px;width:55px;top:67px">Feb-2012</div>
<div class="c " style="left:21.5px;width:55px;top:83px">Mar-2012</div>
<div class="c " style="left:21.5px;width:55px;top:99px">Apr-2012</div>
<div class="c " style="left:21.5px;width:55px;top:115px">May-2012</div>
<div class="c " style="left:21.5px;width:55px;top:131px">Jun-2012</div>
<div class="c " style="left:21.5px;width:55px;top:147px">Jul-2012</div>
<div class="c " style="left:21.5px;width:55px;top:163px">Aug-2012</div>
<div class="c " style="left:21.5px;width:55px;top:179px">Sep-2012</div>
<div class="c " style="left:21.5px;width:55px;top:195px">Oct-2012</div>
<div class="c " style="left:21.5px;width:55px;top:211px">Nov-2012</div>
<div class="c " style="left:21.5px;width:55px;top:227px">Dec-2012</div>
<div class="c " style="left:21.5px;width:55px;top:243px">Jan-2013</div>
<div class="c " style="left:21.5px;width:55px;top:259px">Feb-2013</div>
<div class="c " style="left:21.5px;width:55px;top:275px">Mar-2013</div>
<div class="c " style="left:21.5px;width:55px;top:291px">Apr-2013</div>
<div class="c " style="left:21.5px;width:55px;top:307px">May-2013</div>
<div class="c " style="left:21.5px;width:55px;top:323px">Jun-2013</div>
<div class="c " style="left:21.5px;width:55px;top:339px">Jul-2013</div>
<div class="c " style="left:21.5px;width:55px;top:355px">Aug-2013</div>
<div class="c " style="left:21.5px;width:55px;top:371px">Sep-2013</div>
<div class="c " style="left:21.5px;width:55px;top:387px">Oct-2013</div>
<div class="c " style="left:21.5px;width:55px;top:403px">Nov-2013</div>
<div class="c " style="left:181.3px;width:33.7px;top:51px">Jan</div>
<div class="c " style="left:181.3px;width:33.7px;top:67px">Feb</div>
<div class="c " style="left:181.3px;width:33.7px;top:83px">Mar</div>
<div class="c " style="left:181.3px;width:33.7px;top:99px">Apr</div>
<div class="c " style="left:181.3px;width:33.7px;top:115px">May</div>
<div class="c " style="left:181.3px;width:33.7px;top:131px">Jun</div>
<div class="c " style="left:181.3px;width:33.7px;top:147px">Jul</div>
<div class="c " style="left:181.3px;width:33.7px;top:163px">Aug</div>
<div class="c " style="left:181.3px;width:33.7px;top:179px">Sep</div>
<div class="c " style="left:181.3px;width:33.7px;top:195px">Oct</div>
<div class="c " style="left:181.3px;width:33.7px;top:211px">Nov</div>
<div class="c " style="left:181.3px;width:33.7px;top:227px">Dec</div>
<div class="c b" style="left:217.3px;width:583.7px;top:19.1px;text-align:center;font-size:11.3px">Income - by month 2012-2025</div>
<div class="c b" style="left:217.3px;width:39.6px;top:35px">2012</div>
<div class="c b" style="left:259.2px;width:39.9px;top:35px">2013</div>
<div class="c b" style="left:301.4px;width:39.6px;top:35px">2014</div>
<div class="c b" style="left:343.3px;width:39.7px;top:35px">2015</div>
<div class="c b" style="left:385.3px;width:39.6px;top:35px">2016</div>
<div class="c b" style="left:427.2px;width:39.9px;top:35px">2017</div>
<div class="c b" style="left:469.4px;width:39.6px;top:35px">2018</div>
<div class="c b" style="left:511.3px;width:40px;top:35px">2019</div>
<div class="c b" style="left:553.6px;width:39.5px;top:35px">2020</div>
<div class="c b" style="left:595.4px;width:39.8px;top:35px">2021</div>
<div class="c b" style="left:637.5px;width:36.2px;top:35px">2022</div>
<div class="c b" style="left:676px;width:36.1px;top:35px">2023</div>
<div class="c b" style="left:714.4px;width:36.8px;top:35px">2024</div>
<div class="c b" style="left:753.5px;width:45.2px;top:35px">2025</div>
<div class="c " style="left:217.3px;width:39.4px;top:51px">315</div>
<div class="c " style="left:217.3px;width:39.4px;top:67px">670</div>
<div class="c " style="left:217.3px;width:39.4px;top:83px">695</div>
<div class="c " style="left:217.3px;width:39.4px;top:99px">670</div>
<div class="c " style="left:217.3px;width:39.4px;top:115px">665</div>
<div class="c " style="left:217.3px;width:39.4px;top:131px">720</div>
<div class="c " style="left:217.3px;width:39.4px;top:147px">565</div>
<div class="c " style="left:217.3px;width:39.4px;top:163px">405</div>
<div class="c " style="left:217.3px;width:39.4px;top:179px">420</div>
<div class="c " style="left:217.3px;width:39.4px;top:195px">355</div>
<div class="c " style="left:217.3px;width:39.4px;top:211px">615</div>
<div class="c " style="left:217.3px;width:39.4px;top:227px">410</div>
<div class="c " style="left:259.2px;width:39.7px;top:51px">1,005</div>
<div class="c " style="left:259.2px;width:39.7px;top:67px">740</div>
<div class="c " style="left:259.2px;width:39.7px;top:83px">550</div>
<div class="c " style="left:259.2px;width:39.7px;top:99px">375</div>
<div class="c " style="left:259.2px;width:39.7px;top:115px">545</div>
<div class="c " style="left:259.2px;width:39.7px;top:131px">680</div>
<div class="c " style="left:259.2px;width:39.7px;top:147px">820</div>
<div class="c " style="left:259.2px;width:39.7px;top:163px">1,020</div>
<div class="c " style="left:259.2px;width:39.7px;top:179px">800</div>
<div class="c " style="left:259.2px;width:39.7px;top:195px">925</div>
<div class="c " style="left:259.2px;width:39.7px;top:211px">890</div>
<div class="c " style="left:259.2px;width:39.7px;top:227px">1,135</div>
<div class="c " style="left:301.4px;width:39.4px;top:51px">795</div>
<div class="c " style="left:301.4px;width:39.4px;top:67px">915</div>
<div class="c " style="left:301.4px;width:39.4px;top:83px">1,185</div>
<div class="c " style="left:301.4px;width:39.4px;top:99px">1,270</div>
<div class="c " style="left:301.4px;width:39.4px;top:115px">1,260</div>
<div class="c " style="left:301.4px;width:39.4px;top:131px">1,130</div>
<div class="c " style="left:301.4px;width:39.4px;top:147px">1,110</div>
<div class="c " style="left:301.4px;width:39.4px;top:163px">990</div>
<div class="c " style="left:301.4px;width:39.4px;top:179px">885</div>
<div class="c " style="left:301.4px;width:39.4px;top:195px">1,160</div>
<div class="c " style="left:301.4px;width:39.4px;top:211px">1,155</div>
<div class="c " style="left:301.4px;width:39.4px;top:227px">1,130</div>
<div class="c " style="left:343.3px;width:39.5px;top:51px">1,005</div>
<div class="c " style="left:343.3px;width:39.5px;top:67px">1,060</div>
<div class="c " style="left:343.3px;width:39.5px;top:83px">1,240</div>
<div class="c " style="left:343.3px;width:39.5px;top:99px">1,375</div>
<div class="c " style="left:343.3px;width:39.5px;top:115px">1,585</div>
<div class="c " style="left:343.3px;width:39.5px;top:131px">1,685</div>
<div class="c " style="left:343.3px;width:39.5px;top:147px">1,395</div>
<div class="c " style="left:343.3px;width:39.5px;top:163px">1,735</div>
<div class="c " style="left:343.3px;width:39.5px;top:179px">1,330</div>
<div class="c " style="left:343.3px;width:39.5px;top:195px">1,345</div>
<div class="c " style="left:343.3px;width:39.5px;top:211px">1,785</div>
<div class="c " style="left:343.3px;width:39.5px;top:227px">1,730</div>
<div class="c " style="left:385.3px;width:39.4px;top:51px">1,465</div>
<div class="c " style="left:385.3px;width:39.4px;top:67px">1,630</div>
<div class="c " style="left:385.3px;width:39.4px;top:83px">2,000</div>
<div class="c " style="left:385.3px;width:39.4px;top:99px">1,880</div>
<div class="c " style="left:385.3px;width:39.4px;top:115px">1,610</div>
<div class="c " style="left:385.3px;width:39.4px;top:131px">1,795</div>
<div class="c " style="left:385.3px;width:39.4px;top:147px">1,890</div>
<div class="c " style="left:385.3px;width:39.4px;top:163px">1,775</div>
<div class="c " style="left:385.3px;width:39.4px;top:179px">1,945</div>
<div class="c " style="left:385.3px;width:39.4px;top:195px">2,350</div>
<div class="c " style="left:385.3px;width:39.4px;top:211px">2,485</div>
<div class="c " style="left:385.3px;width:39.4px;top:227px">2,150</div>
<div class="c " style="left:427.2px;width:39.7px;top:51px">1,765</div>
<div class="c " style="left:427.2px;width:39.7px;top:67px">2,040</div>
<div class="c " style="left:427.2px;width:39.7px;top:83px">2,125</div>
<div class="c " style="left:427.2px;width:39.7px;top:99px">2,520</div>
<div class="c " style="left:427.2px;width:39.7px;top:115px">2,615</div>
<div class="c " style="left:427.2px;width:39.7px;top:131px">2,640</div>
<div class="c " style="left:427.2px;width:39.7px;top:147px">2,560</div>
<div class="c " style="left:427.2px;width:39.7px;top:163px">2,585</div>
<div class="c " style="left:427.2px;width:39.7px;top:179px">2,960</div>
<div class="c " style="left:427.2px;width:39.7px;top:195px">3,180</div>
<div class="c " style="left:427.2px;width:39.7px;top:211px">3,515</div>
<div class="c " style="left:427.2px;width:39.7px;top:227px">3,270</div>
<div class="c " style="left:469.4px;width:39.4px;top:51px">2,945</div>
<div class="c " style="left:469.4px;width:39.4px;top:67px">3,065</div>
<div class="c " style="left:469.4px;width:39.4px;top:83px">3,130</div>
<div class="c " style="left:469.4px;width:39.4px;top:99px">3,565</div>
<div class="c " style="left:469.4px;width:39.4px;top:115px">3,285</div>
<div class="c " style="left:469.4px;width:39.4px;top:131px">3,315</div>
<div class="c " style="left:469.4px;width:39.4px;top:147px">3,650</div>
<div class="c " style="left:469.4px;width:39.4px;top:163px">3,870</div>
<div class="c " style="left:469.4px;width:39.4px;top:179px">3,745</div>
<div class="c " style="left:469.4px;width:39.4px;top:195px">4,025</div>
<div class="c " style="left:469.4px;width:39.4px;top:211px">3,765</div>
<div class="c " style="left:469.4px;width:39.4px;top:227px">3,550</div>
<div class="c " style="left:511.3px;width:39.8px;top:51px">3,815</div>
<div class="c " style="left:511.3px;width:39.8px;top:67px">3,970</div>
<div class="c " style="left:511.3px;width:39.8px;top:83px">4,370</div>
<div class="c " style="left:511.3px;width:39.8px;top:99px">4,740</div>
<div class="c " style="left:511.3px;width:39.8px;top:115px">4,515</div>
<div class="c " style="left:511.3px;width:39.8px;top:131px">4,340</div>
<div class="c " style="left:511.3px;width:39.8px;top:147px">4,150</div>
<div class="c " style="left:511.3px;width:39.8px;top:163px">4,600</div>
<div class="c " style="left:511.3px;width:39.8px;top:179px">5,640</div>
<div class="c " style="left:511.3px;width:39.8px;top:195px">5,250</div>
<div class="c " style="left:511.3px;width:39.8px;top:211px">4,850</div>
<div class="c " style="left:511.3px;width:39.8px;top:227px">4,500</div>
<div class="c " style="left:553.6px;width:39.3px;top:51px">4,515</div>
<div class="c " style="left:553.6px;width:39.3px;top:67px">5,030</div>
<div class="c " style="left:553.6px;width:39.3px;top:83px">5,335</div>
<div class="c " style="left:553.6px;width:39.3px;top:99px">5,060</div>
<div class="c " style="left:553.6px;width:39.3px;top:115px">5,110</div>
<div class="c " style="left:553.6px;width:39.3px;top:131px">5,240</div>
<div class="c " style="left:553.6px;width:39.3px;top:147px">5,400</div>
<div class="c " style="left:553.6px;width:39.3px;top:163px">5,450</div>
<div class="c " style="left:553.6px;width:39.3px;top:179px">5,400</div>
<div class="c " style="left:553.6px;width:39.3px;top:195px">5,450</div>
<div class="c " style="left:553.6px;width:39.3px;top:211px">5,650</div>
<div class="c " style="left:553.6px;width:39.3px;top:227px">5,250</div>
<div class="c " style="left:595.4px;width:39.6px;top:51px">5,855</div>
<div class="c " style="left:595.4px;width:39.6px;top:67px">5,285</div>
<div class="c " style="left:595.4px;width:39.6px;top:83px">5,590</div>
<div class="c " style="left:595.4px;width:39.6px;top:99px">5,435</div>
<div class="c " style="left:595.4px;width:39.6px;top:115px">5,695</div>
<div class="c " style="left:595.4px;width:39.6px;top:131px">6,325</div>
<div class="c " style="left:595.4px;width:39.6px;top:147px">6,100</div>
<div class="c " style="left:595.4px;width:39.6px;top:163px">6,150</div>
<div class="c " style="left:595.4px;width:39.6px;top:179px">6,000</div>
<div class="c " style="left:595.4px;width:39.6px;top:195px">6,400</div>
<div class="c " style="left:595.4px;width:39.6px;top:211px">6,550</div>
<div class="c " style="left:595.4px;width:39.6px;top:227px">5,950</div>
<div class="c " style="left:637.5px;width:36px;top:51px">5,945</div>
<div class="c " style="left:637.5px;width:36px;top:67px">5,895</div>
<div class="c " style="left:637.5px;width:36px;top:83px">5,680</div>
<div class="c " style="left:637.5px;width:36px;top:99px">6,185</div>
<div class="c " style="left:637.5px;width:36px;top:115px">6,855</div>
<div class="c " style="left:637.5px;width:36px;top:131px">6,835</div>
<div class="c " style="left:637.5px;width:36px;top:147px">6,700</div>
<div class="c " style="left:637.5px;width:36px;top:163px">6,700</div>
<div class="c " style="left:637.5px;width:36px;top:179px">6,850</div>
<div class="c " style="left:637.5px;width:36px;top:195px">6,650</div>
<div class="c " style="left:637.5px;width:36px;top:211px">6,600</div>
<div class="c " style="left:637.5px;width:36px;top:227px">6,700</div>
<div class="c " style="left:676px;width:35.9px;top:51px">7,500</div>
<div class="c " style="left:676px;width:35.9px;top:67px">7,560</div>
<div class="c " style="left:676px;width:35.9px;top:83px">7,365</div>
<div class="c " style="left:676px;width:35.9px;top:99px">7,420</div>
<div class="c " style="left:676px;width:35.9px;top:115px">7,645</div>
<div class="c " style="left:676px;width:35.9px;top:131px">7,470</div>
<div class="c " style="left:676px;width:35.9px;top:147px">7,800</div>
<div class="c " style="left:676px;width:35.9px;top:163px">7,800</div>
<div class="c " style="left:676px;width:35.9px;top:179px">8,450</div>
<div class="c " style="left:676px;width:35.9px;top:195px">8,250</div>
<div class="c " style="left:676px;width:35.9px;top:211px">8,650</div>
<div class="c " style="left:676px;width:35.9px;top:227px">7,500</div>
<div class="c " style="left:714.4px;width:36.6px;top:51px">8,550</div>
<div class="c " style="left:714.4px;width:36.6px;top:67px">8,185</div>
<div class="c " style="left:714.4px;width:36.6px;top:83px">8,235</div>
<div class="c " style="left:714.4px;width:36.6px;top:99px">7,890</div>
<div class="c " style="left:714.4px;width:36.6px;top:115px">7,575</div>
<div class="c " style="left:714.4px;width:36.6px;top:131px">7,775</div>
<div class="c " style="left:714.4px;width:36.6px;top:147px">9,050</div>
<div class="c " style="left:714.4px;width:36.6px;top:163px">8,950</div>
<div class="c " style="left:714.4px;width:36.6px;top:179px">9,100</div>
<div class="c " style="left:714.4px;width:36.6px;top:195px">9,350</div>
<div class="c " style="left:714.4px;width:36.6px;top:211px">9,450</div>
<div class="c " style="left:714.4px;width:36.6px;top:227px">9,800</div>
<div class="c " style="left:753.5px;width:41.2px;top:51px">9,935</div>
<div class="c " style="left:753.5px;width:41.2px;top:67px">10,450</div>
<div class="c " style="left:753.5px;width:41.2px;top:83px">10,500</div>
<svg class="abs" style="left:116.9px;top:39.6px" width="12" height="12" viewBox="-6 -6 12 12"><path d="M-1.5-4h3v2.5h2.9v3h-2.9v2.500h-3v-2.500h-2.900v-3h2.900z" fill="#fff" stroke="#111" stroke-width="1.1" stroke-linejoin="round"/></svg>
</div>
<div class="abs" style="left:517.5px;top:290px;width:476px;height:239px;background:#fff;border:1.5px solid #747474;box-shadow:0 0 3.5px 1px rgba(60,60,60,.7)"></div>
<svg class="abs" style="left:0;top:0" width="1024" height="680" viewBox="0 0 1024 680" font-family="Liberation Sans, sans-serif">
<line x1="561.5" y1="478.8" x2="980.5" y2="478.8" stroke="#dcdcdc" stroke-width="1"/>
<text x="552.5" y="481.8" font-size="8.7" fill="#606060" text-anchor="end">0</text>
<line x1="561.5" y1="449.433" x2="980.5" y2="449.433" stroke="#dcdcdc" stroke-width="1"/>
<text x="552.5" y="452.433" font-size="8.7" fill="#606060" text-anchor="end">2,000</text>
<line x1="561.5" y1="420.067" x2="980.5" y2="420.067" stroke="#dcdcdc" stroke-width="1"/>
<text x="552.5" y="423.067" font-size="8.7" fill="#606060" text-anchor="end">4,000</text>
<line x1="561.5" y1="390.7" x2="980.5" y2="390.7" stroke="#dcdcdc" stroke-width="1"/>
<text x="552.5" y="393.7" font-size="8.7" fill="#606060" text-anchor="end">6,000</text>
<line x1="561.5" y1="361.333" x2="980.5" y2="361.333" stroke="#dcdcdc" stroke-width="1"/>
<text x="552.5" y="364.333" font-size="8.7" fill="#606060" text-anchor="end">8,000</text>
<line x1="561.5" y1="331.967" x2="980.5" y2="331.967" stroke="#dcdcdc" stroke-width="1"/>
<text x="552.5" y="334.967" font-size="8.7" fill="#606060" text-anchor="end">10,000</text>
<line x1="561.5" y1="302.6" x2="980.5" y2="302.6" stroke="#dcdcdc" stroke-width="1"/>
<text x="552.5" y="305.6" font-size="8.7" fill="#606060" text-anchor="end">12,000</text>
<defs><filter id="vb" x="-2%" y="-2%" width="104%" height="104%"><feColorMatrix type="saturate" values="0.55"/><feGaussianBlur stdDeviation="0.35 0.2"/></filter></defs><g filter="url(#vb)">
<rect x="563.81" y="474.17" width="2.11" height="4.63" fill="#156082"/>
<rect x="565.92" y="468.96" width="2.11" height="9.84" fill="#E97132"/>
<rect x="568.03" y="468.60" width="2.11" height="10.20" fill="#196B24"/>
<rect x="570.14" y="468.96" width="2.11" height="9.84" fill="#0F9ED5"/>
<rect x="572.25" y="469.04" width="2.11" height="9.76" fill="#A02B93"/>
<rect x="574.36" y="468.23" width="2.11" height="10.57" fill="#4EA72E"/>
<rect x="576.46" y="470.50" width="2.11" height="8.30" fill="#0D3A4E"/>
<rect x="578.57" y="472.85" width="2.11" height="5.95" fill="#8C441E"/>
<rect x="580.68" y="472.63" width="2.11" height="6.17" fill="#0F4016"/>
<rect x="582.79" y="473.59" width="2.11" height="5.21" fill="#095F80"/>
<rect x="584.90" y="469.77" width="2.11" height="9.03" fill="#601A58"/>
<rect x="587.01" y="472.78" width="2.11" height="6.02" fill="#2F641C"/>
<rect x="593.74" y="464.04" width="2.11" height="14.76" fill="#156082"/>
<rect x="595.85" y="467.93" width="2.11" height="10.87" fill="#E97132"/>
<rect x="597.96" y="470.72" width="2.11" height="8.08" fill="#196B24"/>
<rect x="600.07" y="473.29" width="2.11" height="5.51" fill="#0F9ED5"/>
<rect x="602.17" y="470.80" width="2.11" height="8.00" fill="#A02B93"/>
<rect x="604.28" y="468.82" width="2.11" height="9.98" fill="#4EA72E"/>
<rect x="606.39" y="466.76" width="2.11" height="12.04" fill="#0D3A4E"/>
<rect x="608.50" y="463.82" width="2.11" height="14.98" fill="#8C441E"/>
<rect x="610.61" y="467.05" width="2.11" height="11.75" fill="#0F4016"/>
<rect x="612.72" y="465.22" width="2.11" height="13.58" fill="#095F80"/>
<rect x="614.83" y="465.73" width="2.11" height="13.07" fill="#601A58"/>
<rect x="616.94" y="462.13" width="2.11" height="16.67" fill="#2F641C"/>
<rect x="623.67" y="467.13" width="2.11" height="11.67" fill="#156082"/>
<rect x="625.78" y="465.36" width="2.11" height="13.44" fill="#E97132"/>
<rect x="627.88" y="461.40" width="2.11" height="17.40" fill="#196B24"/>
<rect x="629.99" y="460.15" width="2.11" height="18.65" fill="#0F9ED5"/>
<rect x="632.10" y="460.30" width="2.11" height="18.50" fill="#A02B93"/>
<rect x="634.21" y="462.21" width="2.11" height="16.59" fill="#4EA72E"/>
<rect x="636.32" y="462.50" width="2.11" height="16.30" fill="#0D3A4E"/>
<rect x="638.43" y="464.26" width="2.11" height="14.54" fill="#8C441E"/>
<rect x="640.54" y="465.81" width="2.11" height="12.99" fill="#0F4016"/>
<rect x="642.65" y="461.77" width="2.11" height="17.03" fill="#095F80"/>
<rect x="644.76" y="461.84" width="2.11" height="16.96" fill="#601A58"/>
<rect x="646.87" y="462.21" width="2.11" height="16.59" fill="#2F641C"/>
<rect x="653.60" y="464.04" width="2.11" height="14.76" fill="#156082"/>
<rect x="655.70" y="463.24" width="2.11" height="15.56" fill="#E97132"/>
<rect x="657.81" y="460.59" width="2.11" height="18.21" fill="#196B24"/>
<rect x="659.92" y="458.61" width="2.11" height="20.19" fill="#0F9ED5"/>
<rect x="662.03" y="455.53" width="2.11" height="23.27" fill="#A02B93"/>
<rect x="664.14" y="454.06" width="2.11" height="24.74" fill="#4EA72E"/>
<rect x="666.25" y="458.32" width="2.11" height="20.48" fill="#0D3A4E"/>
<rect x="668.36" y="453.32" width="2.11" height="25.48" fill="#8C441E"/>
<rect x="670.47" y="459.27" width="2.11" height="19.53" fill="#0F4016"/>
<rect x="672.58" y="459.05" width="2.11" height="19.75" fill="#095F80"/>
<rect x="674.69" y="452.59" width="2.11" height="26.21" fill="#601A58"/>
<rect x="676.80" y="453.40" width="2.11" height="25.40" fill="#2F641C"/>
<rect x="683.52" y="457.29" width="2.11" height="21.51" fill="#156082"/>
<rect x="685.63" y="454.87" width="2.11" height="23.93" fill="#E97132"/>
<rect x="687.74" y="449.43" width="2.11" height="29.37" fill="#196B24"/>
<rect x="689.85" y="451.20" width="2.11" height="27.60" fill="#0F9ED5"/>
<rect x="691.96" y="455.16" width="2.11" height="23.64" fill="#A02B93"/>
<rect x="694.07" y="452.44" width="2.11" height="26.36" fill="#4EA72E"/>
<rect x="696.18" y="451.05" width="2.11" height="27.75" fill="#0D3A4E"/>
<rect x="698.29" y="452.74" width="2.11" height="26.06" fill="#8C441E"/>
<rect x="700.40" y="450.24" width="2.11" height="28.56" fill="#0F4016"/>
<rect x="702.51" y="444.29" width="2.11" height="34.51" fill="#095F80"/>
<rect x="704.62" y="442.31" width="2.11" height="36.49" fill="#601A58"/>
<rect x="706.72" y="447.23" width="2.11" height="31.57" fill="#2F641C"/>
<rect x="713.45" y="452.88" width="2.11" height="25.92" fill="#156082"/>
<rect x="715.56" y="448.85" width="2.11" height="29.95" fill="#E97132"/>
<rect x="717.67" y="447.60" width="2.11" height="31.20" fill="#196B24"/>
<rect x="719.78" y="441.80" width="2.11" height="37.00" fill="#0F9ED5"/>
<rect x="721.89" y="440.40" width="2.11" height="38.40" fill="#A02B93"/>
<rect x="724.00" y="440.04" width="2.11" height="38.76" fill="#4EA72E"/>
<rect x="726.11" y="441.21" width="2.11" height="37.59" fill="#0D3A4E"/>
<rect x="728.22" y="440.84" width="2.11" height="37.96" fill="#8C441E"/>
<rect x="730.33" y="435.34" width="2.11" height="43.46" fill="#0F4016"/>
<rect x="732.43" y="432.11" width="2.11" height="46.69" fill="#095F80"/>
<rect x="734.54" y="427.19" width="2.11" height="51.61" fill="#601A58"/>
<rect x="736.65" y="430.79" width="2.11" height="48.01" fill="#2F641C"/>
<rect x="743.38" y="435.56" width="2.11" height="43.24" fill="#156082"/>
<rect x="745.49" y="433.80" width="2.11" height="45.00" fill="#E97132"/>
<rect x="747.60" y="432.84" width="2.11" height="45.96" fill="#196B24"/>
<rect x="749.71" y="426.45" width="2.11" height="52.35" fill="#0F9ED5"/>
<rect x="751.82" y="430.57" width="2.11" height="48.23" fill="#A02B93"/>
<rect x="753.93" y="430.12" width="2.11" height="48.68" fill="#4EA72E"/>
<rect x="756.04" y="425.21" width="2.11" height="53.59" fill="#0D3A4E"/>
<rect x="758.14" y="421.98" width="2.11" height="56.82" fill="#8C441E"/>
<rect x="760.25" y="423.81" width="2.11" height="54.99" fill="#0F4016"/>
<rect x="762.36" y="419.70" width="2.11" height="59.10" fill="#095F80"/>
<rect x="764.47" y="423.52" width="2.11" height="55.28" fill="#601A58"/>
<rect x="766.58" y="426.67" width="2.11" height="52.13" fill="#2F641C"/>
<rect x="773.31" y="422.78" width="2.11" height="56.02" fill="#156082"/>
<rect x="775.42" y="420.51" width="2.11" height="58.29" fill="#E97132"/>
<rect x="777.53" y="414.63" width="2.11" height="64.17" fill="#196B24"/>
<rect x="779.64" y="409.20" width="2.11" height="69.60" fill="#0F9ED5"/>
<rect x="781.75" y="412.50" width="2.11" height="66.30" fill="#A02B93"/>
<rect x="783.86" y="415.07" width="2.11" height="63.73" fill="#4EA72E"/>
<rect x="785.96" y="417.86" width="2.11" height="60.94" fill="#0D3A4E"/>
<rect x="788.07" y="411.26" width="2.11" height="67.54" fill="#8C441E"/>
<rect x="790.18" y="395.99" width="2.11" height="82.81" fill="#0F4016"/>
<rect x="792.29" y="401.71" width="2.11" height="77.09" fill="#095F80"/>
<rect x="794.40" y="407.59" width="2.11" height="71.21" fill="#601A58"/>
<rect x="796.51" y="412.73" width="2.11" height="66.08" fill="#2F641C"/>
<rect x="803.24" y="412.50" width="2.11" height="66.30" fill="#156082"/>
<rect x="805.35" y="404.94" width="2.11" height="73.86" fill="#E97132"/>
<rect x="807.46" y="400.46" width="2.11" height="78.34" fill="#196B24"/>
<rect x="809.57" y="404.50" width="2.11" height="74.30" fill="#0F9ED5"/>
<rect x="811.67" y="403.77" width="2.11" height="75.03" fill="#A02B93"/>
<rect x="813.78" y="401.86" width="2.11" height="76.94" fill="#4EA72E"/>
<rect x="815.89" y="399.51" width="2.11" height="79.29" fill="#0D3A4E"/>
<rect x="818.00" y="398.78" width="2.11" height="80.02" fill="#8C441E"/>
<rect x="820.11" y="399.51" width="2.11" height="79.29" fill="#0F4016"/>
<rect x="822.22" y="398.78" width="2.11" height="80.02" fill="#095F80"/>
<rect x="824.33" y="395.84" width="2.11" height="82.96" fill="#601A58"/>
<rect x="826.44" y="401.71" width="2.11" height="77.09" fill="#2F641C"/>
<rect x="833.17" y="392.83" width="2.11" height="85.97" fill="#156082"/>
<rect x="835.28" y="401.20" width="2.11" height="77.60" fill="#E97132"/>
<rect x="837.38" y="396.72" width="2.11" height="82.08" fill="#196B24"/>
<rect x="839.49" y="399.00" width="2.11" height="79.80" fill="#0F9ED5"/>
<rect x="841.60" y="395.18" width="2.11" height="83.62" fill="#A02B93"/>
<rect x="843.71" y="385.93" width="2.11" height="92.87" fill="#4EA72E"/>
<rect x="845.82" y="389.23" width="2.11" height="89.57" fill="#0D3A4E"/>
<rect x="847.93" y="388.50" width="2.11" height="90.30" fill="#8C441E"/>
<rect x="850.04" y="390.70" width="2.11" height="88.10" fill="#0F4016"/>
<rect x="852.15" y="384.83" width="2.11" height="93.97" fill="#095F80"/>
<rect x="854.26" y="382.62" width="2.11" height="96.18" fill="#601A58"/>
<rect x="856.37" y="391.43" width="2.11" height="87.37" fill="#2F641C"/>
<rect x="863.10" y="391.51" width="2.11" height="87.29" fill="#156082"/>
<rect x="865.20" y="392.24" width="2.11" height="86.56" fill="#E97132"/>
<rect x="867.31" y="395.40" width="2.11" height="83.40" fill="#196B24"/>
<rect x="869.42" y="387.98" width="2.11" height="90.82" fill="#0F9ED5"/>
<rect x="871.53" y="378.15" width="2.11" height="100.65" fill="#A02B93"/>
<rect x="873.64" y="378.44" width="2.11" height="100.36" fill="#4EA72E"/>
<rect x="875.75" y="380.42" width="2.11" height="98.38" fill="#0D3A4E"/>
<rect x="877.86" y="380.42" width="2.11" height="98.38" fill="#8C441E"/>
<rect x="879.97" y="378.22" width="2.11" height="100.58" fill="#0F4016"/>
<rect x="882.08" y="381.16" width="2.11" height="97.64" fill="#095F80"/>
<rect x="884.19" y="381.89" width="2.11" height="96.91" fill="#601A58"/>
<rect x="886.30" y="380.42" width="2.11" height="98.38" fill="#2F641C"/>
<rect x="893.02" y="368.68" width="2.11" height="110.12" fill="#156082"/>
<rect x="895.13" y="367.79" width="2.11" height="111.01" fill="#E97132"/>
<rect x="897.24" y="370.66" width="2.11" height="108.14" fill="#196B24"/>
<rect x="899.35" y="369.85" width="2.11" height="108.95" fill="#0F9ED5"/>
<rect x="901.46" y="366.55" width="2.11" height="112.25" fill="#A02B93"/>
<rect x="903.57" y="369.12" width="2.11" height="109.68" fill="#4EA72E"/>
<rect x="905.68" y="364.27" width="2.11" height="114.53" fill="#0D3A4E"/>
<rect x="907.79" y="364.27" width="2.11" height="114.53" fill="#8C441E"/>
<rect x="909.90" y="354.73" width="2.11" height="124.07" fill="#0F4016"/>
<rect x="912.01" y="357.66" width="2.11" height="121.14" fill="#095F80"/>
<rect x="914.12" y="351.79" width="2.11" height="127.01" fill="#601A58"/>
<rect x="916.22" y="368.68" width="2.11" height="110.12" fill="#2F641C"/>
<rect x="922.95" y="353.26" width="2.11" height="125.54" fill="#156082"/>
<rect x="925.06" y="358.62" width="2.11" height="120.18" fill="#E97132"/>
<rect x="927.17" y="357.88" width="2.11" height="120.92" fill="#196B24"/>
<rect x="929.28" y="362.95" width="2.11" height="115.85" fill="#0F9ED5"/>
<rect x="931.39" y="367.57" width="2.11" height="111.23" fill="#A02B93"/>
<rect x="933.50" y="364.64" width="2.11" height="114.16" fill="#4EA72E"/>
<rect x="935.61" y="345.92" width="2.11" height="132.88" fill="#0D3A4E"/>
<rect x="937.72" y="347.38" width="2.11" height="131.42" fill="#8C441E"/>
<rect x="939.83" y="345.18" width="2.11" height="133.62" fill="#0F4016"/>
<rect x="941.93" y="341.51" width="2.11" height="137.29" fill="#095F80"/>
<rect x="944.04" y="340.04" width="2.11" height="138.76" fill="#601A58"/>
<rect x="946.15" y="334.90" width="2.11" height="143.90" fill="#2F641C"/>
<rect x="952.88" y="332.92" width="2.11" height="145.88" fill="#156082"/>
<rect x="954.99" y="325.36" width="2.11" height="153.44" fill="#E97132"/>
<rect x="957.10" y="324.62" width="2.11" height="154.17" fill="#196B24"/>
</g>
<text x="576.5" y="494.3" font-size="8.7" fill="#595959" text-anchor="middle">2012</text>
<text x="606.4" y="494.3" font-size="8.7" fill="#595959" text-anchor="middle">2013</text>
<text x="636.3" y="494.3" font-size="8.7" fill="#595959" text-anchor="middle">2014</text>
<text x="666.2" y="494.3" font-size="8.7" fill="#595959" text-anchor="middle">2015</text>
<text x="696.2" y="494.3" font-size="8.7" fill="#595959" text-anchor="middle">2016</text>
<text x="726.1" y="494.3" font-size="8.7" fill="#595959" text-anchor="middle">2017</text>
<text x="756.0" y="494.3" font-size="8.7" fill="#595959" text-anchor="middle">2018</text>
<text x="786.0" y="494.3" font-size="8.7" fill="#595959" text-anchor="middle">2019</text>
<text x="815.9" y="494.3" font-size="8.7" fill="#595959" text-anchor="middle">2020</text>
<text x="845.8" y="494.3" font-size="8.7" fill="#595959" text-anchor="middle">2021</text>
<text x="875.8" y="494.3" font-size="8.7" fill="#595959" text-anchor="middle">2022</text>
<text x="905.7" y="494.3" font-size="8.7" fill="#595959" text-anchor="middle">2023</text>
<text x="935.6" y="494.3" font-size="8.7" fill="#595959" text-anchor="middle">2024</text>
<text x="965.5" y="494.3" font-size="8.7" fill="#595959" text-anchor="middle">2025</text>
<rect x="587" y="510.3" width="4.6" height="4.6" fill="#156082"/>
<text x="593.6" y="515.7" font-size="8.7" fill="#595959">Jan</text>
<rect x="615" y="510.3" width="4.6" height="4.6" fill="#E97132"/>
<text x="621.6" y="515.7" font-size="8.7" fill="#595959">Feb</text>
<rect x="644" y="510.3" width="4.6" height="4.6" fill="#196B24"/>
<text x="650.6" y="515.7" font-size="8.7" fill="#595959">Mar</text>
<rect x="674" y="510.3" width="4.6" height="4.6" fill="#0F9ED5"/>
<text x="680.6" y="515.7" font-size="8.7" fill="#595959">Apr</text>
<rect x="702" y="510.3" width="4.6" height="4.6" fill="#A02B93"/>
<text x="708.6" y="515.7" font-size="8.7" fill="#595959">May</text>
<rect x="732.5" y="510.3" width="4.6" height="4.6" fill="#4EA72E"/>
<text x="739.1" y="515.7" font-size="8.7" fill="#595959">Jun</text>
<rect x="761" y="510.3" width="4.6" height="4.6" fill="#0D3A4E"/>
<text x="767.6" y="515.7" font-size="8.7" fill="#595959">Jul</text>
<rect x="786" y="510.3" width="4.6" height="4.6" fill="#8C441E"/>
<text x="792.6" y="515.7" font-size="8.7" fill="#595959">Aug</text>
<rect x="816" y="510.3" width="4.6" height="4.6" fill="#0F4016"/>
<text x="822.6" y="515.7" font-size="8.7" fill="#595959">Sep</text>
<rect x="846" y="510.3" width="4.6" height="4.6" fill="#095F80"/>
<text x="852.6" y="515.7" font-size="8.7" fill="#595959">Oct</text>
<rect x="874" y="510.3" width="4.6" height="4.6" fill="#601A58"/>
<text x="880.6" y="515.7" font-size="8.7" fill="#595959">Nov</text>
<rect x="904" y="510.3" width="4.6" height="4.6" fill="#2F641C"/>
<text x="910.6" y="515.7" font-size="8.7" fill="#595959">Dec</text>
<rect x="561.5" y="302.6" width="419" height="176.2" fill="none" stroke="#9a9a9a" stroke-width="1"/>
<circle cx="561.5" cy="302.6" r="3.3" fill="#fff" stroke="#444" stroke-width="1.1"/>
<circle cx="561.5" cy="478.8" r="3.3" fill="#fff" stroke="#444" stroke-width="1.1"/>
<circle cx="771" cy="302.6" r="3.3" fill="#fff" stroke="#444" stroke-width="1.1"/>
<circle cx="771" cy="478.8" r="3.3" fill="#fff" stroke="#444" stroke-width="1.1"/>
<circle cx="980.5" cy="302.6" r="3.3" fill="#fff" stroke="#444" stroke-width="1.1"/>
<circle cx="980.5" cy="478.8" r="3.3" fill="#fff" stroke="#444" stroke-width="1.1"/>
<circle cx="561.5" cy="390.7" r="3.3" fill="#fff" stroke="#444" stroke-width="1.1"/>
<circle cx="980.5" cy="390.7" r="3.3" fill="#fff" stroke="#444" stroke-width="1.1"/>
<circle cx="518.5" cy="291" r="3.3" fill="#fff" stroke="#444" stroke-width="1.1"/>
<circle cx="518.5" cy="528" r="3.3" fill="#fff" stroke="#444" stroke-width="1.1"/>
<circle cx="755.5" cy="291" r="3.3" fill="#fff" stroke="#444" stroke-width="1.1"/>
<circle cx="755.5" cy="528" r="3.3" fill="#fff" stroke="#444" stroke-width="1.1"/>
<circle cx="992.5" cy="291" r="3.3" fill="#fff" stroke="#444" stroke-width="1.1"/>
<circle cx="992.5" cy="528" r="3.3" fill="#fff" stroke="#444" stroke-width="1.1"/>
<circle cx="518.5" cy="409.5" r="3.3" fill="#fff" stroke="#444" stroke-width="1.1"/>
<circle cx="992.5" cy="409.5" r="3.3" fill="#fff" stroke="#444" stroke-width="1.1"/>
</svg>
<div class="abs" style="left:490.5px;top:291px;width:19px;height:18.5px;background:#fff;border:1px solid #bdbdbd;border-radius:1.5px"></div>
<div class="abs" style="left:490.5px;top:317.5px;width:19px;height:18.5px;background:#fff;border:1px solid #bdbdbd;border-radius:1.5px"></div>
<div class="abs" style="left:490.5px;top:344px;width:19px;height:18.5px;background:#fff;border:1px solid #bdbdbd;border-radius:1.5px"></div>
<svg class="abs" style="left:490.5px;top:291px" width="19" height="72" viewBox="0 0 19 72">
<path d="M9.5 4.5v10M4.5 9.5h10" stroke="#8aa08f" stroke-width="1" fill="none"/>
<path d="M14.5 30.5l-7 8" stroke="#777" stroke-width="1.5" fill="none" stroke-linecap="round"/><path d="M7.8 37.5c-1.6-.6-3 .6-3.2 2.2-.1.9-.8 1.3-1.6 1.5 1.6 1 4.6.8 5.8-1.2z" fill="#2e8fd6"/>
<path d="M4.5 57.5h10l-3.8 5v5.5h-2.4v-5.5z" stroke="#6b6b6b" stroke-width="1" fill="none" stroke-linejoin="round"/>
</svg>
<div class="abs" style="left:140px;top:396px;width:428.6px;height:38px;border-radius:4.5px;background:rgba(140,212,248,.9);box-shadow:3px 1.5px 3px rgba(0,0,0,.4)"></div>
<div class="t" style="left:151px;top:405.5px;font-size:16.3px;letter-spacing:.03px;font-weight:bold;color:#111;transform-origin:0 0" id="callout">TOCOL - Display an array of data as a single column</div>
<div id="vscroll" class="abs"></div>
<div class="abs" style="left:1015.6px;top:157.8px;width:5.6px;height:49.6px;border-radius:3px;background:#6b6b6b"></div>
<svg class="abs" style="left:1011px;top:146px" width="13" height="394" viewBox="0 0 13 394"><path d="M4.2 7.800h6.400l-3.200-4.600z" fill="#5f5f5f"/><path d="M4 386.500h7l-3.500 4.800z" fill="#5f5f5f"/></svg>
<div id="sheettabs" class="abs">
<div class="st" style="left:50.6px;width:135.4px;background:#97e7c7"></div>
<div class="st" style="left:186px;width:58.5px;background:#e2a5d6"></div>
<div class="st" style="left:244.5px;width:39.5px;background:#f3fbf9"></div>
<div class="st" style="left:284px;width:43px;background:#57d465"></div>
<div class="st" style="left:327px;width:37.4px;background:#ffeb2e"></div>
<div class="st" style="left:364.4px;width:60px;background:#7fe4f8"></div>
<div class="st" style="left:424.4px;width:43.1px;background:#63d98b"></div>
<div class="st" style="left:467.5px;width:45px;background:#f9cdf1"></div>
</div>
<div class="t" style="left:58.00px;top:543.16px;font-size:8.20px;color:#1f6650;letter-spacing:-0.071px;">CHOOSEROWS CHOOSECOLS</div>
<div class="t" style="left:191.40px;top:543.16px;font-size:8.20px;color:#5a2a55;letter-spacing:-0.031px;">TAKE DROP</div>
<div class="t" style="left:250.10px;top:543.16px;font-size:8.20px;color:#17504a;font-weight:bold;letter-spacing:-0.010px;">TOCOL</div>
<div class="t" style="left:290.00px;top:543.16px;font-size:8.20px;color:#184d20;letter-spacing:0.124px;">TOROW</div>
<div class="t" style="left:333.10px;top:543.16px;font-size:8.20px;color:#5e4a00;letter-spacing:0.025px;">WRAP</div>
<div class="t" style="left:369.70px;top:542.65px;font-size:8.80px;color:#0d4a7a;letter-spacing:0.297px;">Wrap-Table</div>
<div class="t" style="left:429.70px;top:543.16px;font-size:8.20px;color:#164a2a;letter-spacing:-0.100px;">VSTACK</div>
<div class="t" style="left:473.80px;top:543.16px;font-size:8.20px;color:#6a2a62;letter-spacing:-0.025px;">HSTACK</div>
<div class="abs" style="left:0;top:540px;width:1024px;height:14.5px">
<div class="abs" style="left:246px;top:12.5px;width:36.5px;height:1.8px;background:#1d6f64"></div>
<svg class="abs" style="left:8px;top:2px" width="30" height="11" viewBox="0 0 30 11" fill="none" stroke="#cdcdcd" stroke-width="1" stroke-linecap="round" stroke-linejoin="round"><path d="M7 3.200l-2 2.200 2 2.200M19.500 3.200l2 2.200-2 2.200"/></svg>
<svg class="abs" style="left:529px;top:1.5px" width="11" height="11" viewBox="0 0 11 11"><circle cx="5.5" cy="5.5" r="4.6" fill="none" stroke="#8a8a8a" stroke-width=".9"/><path d="M5.5 3.2v4.6M3.2 5.5h4.6" stroke="#8a8a8a" stroke-width=".9"/></svg>
<svg class="abs" style="left:710px;top:0" width="314" height="14.5" viewBox="0 0 314 14.5"><circle cx="5.2" cy="4.6" r=".8" fill="#555"/><circle cx="5.2" cy="7" r=".8" fill="#555"/><circle cx="5.2" cy="9.4" r=".8" fill="#555"/><path d="M22 4v6l-4.6-3z" fill="#555"/><rect x="25" y="4" width="229" height="6" rx="3" fill="#6b6b6b"/><path d="M293 4v6l4.6-3z" fill="#555"/></svg>
</div>
<div id="status" class="abs">
</div>
<div class="t" style="left:7.90px;top:559.99px;font-size:6.75px;color:#6a6a6a;">Ready</div>
<div class="t" style="left:75.00px;top:559.71px;font-size:7.08px;color:#333;font-weight:bold;">Accessibility: Investigate</div>
<div class="t" style="left:749.30px;top:559.48px;font-size:7.35px;color:#444;">Display Settings</div>
<div class="t" style="left:1002.00px;top:559.91px;font-size:6.85px;color:#555;">115%</div>
<div class="abs" style="left:0;top:554.5px;width:1024px;height:16px">
<svg class="abs" style="left:39px;top:2.5px" width="12" height="12" viewBox="0 0 12 12"><rect x="1" y="1.5" width="10" height="9" rx="1" fill="none" stroke="#666" stroke-width="1"/><path d="M1 4h10" stroke="#666" stroke-width="1"/><circle cx="7.2" cy="7.2" r="2" fill="#666"/></svg>
<svg class="abs" style="left:61px;top:2.5px" width="12" height="12" viewBox="0 0 12 12"><circle cx="5" cy="2.2" r="1.4" fill="none" stroke="#555" stroke-width=".9"/><path d="M1 4.5l3 .8v2.2l-2 3.5M9 4.5l-3 .8v2.2l1.2 2M4 7.5h2" fill="none" stroke="#555" stroke-width=".9"/><path d="M7.5 8l3 3M10.5 8l-3 3" stroke="#555" stroke-width=".9"/></svg>
<svg class="abs" style="left:736px;top:2.5px" width="13" height="12" viewBox="0 0 13 12"><rect x="1" y="1" width="10.5" height="7" rx=".8" fill="none" stroke="#555" stroke-width="1"/><path d="M4 10.5h4" stroke="#555" stroke-width="1"/><circle cx="9" cy="8.4" r="2.4" fill="#f6f6f6" stroke="#555" stroke-width="1"/><circle cx="9" cy="8.4" r=".7" fill="#555"/></svg>
<div class="abs" style="left:816.5px;top:0;width:26.5px;height:17px;background:#dedede"></div>
<svg class="abs" style="left:823px;top:2.5px" width="70" height="12" viewBox="0 0 70 12"><g fill="none" stroke="#555" stroke-width="1"><rect x="1.5" y="1.5" width="9" height="9"/><path d="M4.5 1.5v9M7.5 1.5v9M1.5 4.5h9M1.5 7.5h9"/><rect x="30" y="1.5" width="9" height="9"/><rect x="32.5" y="3.8" width="4" height="4.6"/><rect x="58.5" y="1.5" width="9" height="9"/><path d="M58.5 6h4.5V1.5"/></g></svg>
<svg class="abs" style="left:900px;top:2.5px" width="100" height="12" viewBox="0 0 100 12"><path d="M4.5 6h4" stroke="#999" stroke-width="1"/><path d="M14 6h69" stroke="#8a8a8a" stroke-width="1"/><rect x="48.6" y="2" width="2.8" height="8" rx="1" fill="#555"/><path d="M87.5 6h4.5M89.75 3.75v4.5" stroke="#999" stroke-width="1"/></svg>
</div>
<div id="strip" class="abs"></div>
<div class="abs" style="left:0;top:0;width:1024px;height:680px;opacity:.8">
<div class="t" style="left:888.80px;top:539.60px;font-size:14.18px;color:#fff;font-weight:bold;text-shadow:0 0 1.6px rgba(60,60,60,.75),0 0 .6px rgba(60,60,60,.6);">Linked</div>
<div class="abs" style="left:935.3px;top:538.8px;width:15.8px;height:16px;border:1.3px solid #fff;border-radius:2px;box-shadow:0 0 1.4px rgba(60,60,60,.7),inset 0 0 1.4px rgba(60,60,60,.5)"></div>
<div class="t" style="left:937.60px;top:540.93px;font-size:12.60px;color:#fff;font-weight:bold;text-shadow:0 0 1.6px rgba(60,60,60,.75),0 0 .6px rgba(60,60,60,.6);">in</div>
<div class="t" style="left:954.50px;top:539.59px;font-size:14.18px;color:#fff;text-shadow:0 0 1.6px rgba(60,60,60,.75),0 0 .6px rgba(60,60,60,.6);">Learning</div>
</div>
<div id="banner" class="abs">
<div class="t" style="left:727.3px;top:29.1px;font-size:29.8px;font-weight:bold;color:#fff;letter-spacing:.55px">Linked</div>
<div class="abs" style="left:826px;top:28.2px;width:32.3px;height:32px;border-radius:3px;background:#fff"></div>
<div class="t" style="left:828.3px;top:30.1px;font-size:30px;font-weight:bold;color:#0a6e3e;letter-spacing:0px">in</div>
<div class="t" style="left:865.2px;top:29.9px;font-size:28.8px;color:#fff;letter-spacing:0">Learning</div>
</div>
</body></html>
